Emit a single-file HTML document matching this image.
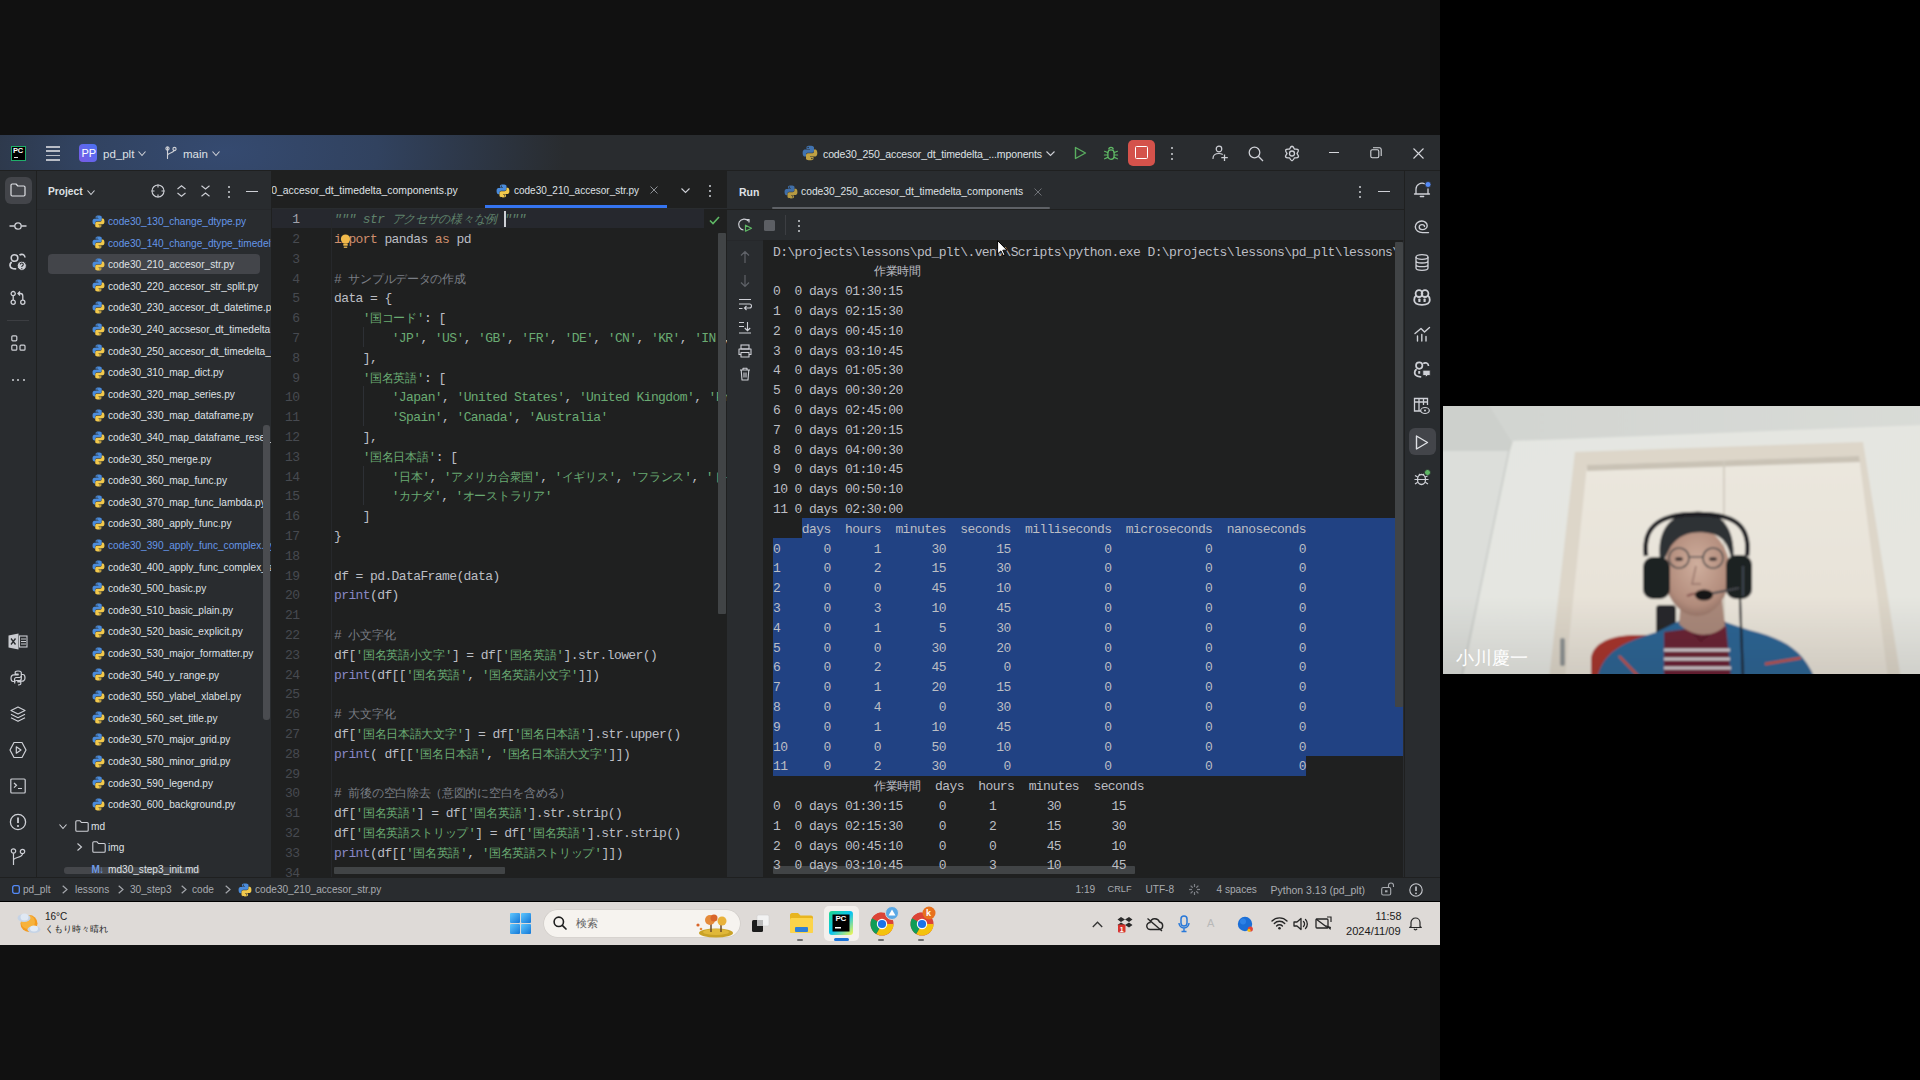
<!DOCTYPE html><html><head><meta charset="utf-8"><title>PyCharm</title><style>
*{box-sizing:border-box;margin:0;padding:0}
html,body{width:1920px;height:1080px;overflow:hidden;background:#000}
body{position:relative;font-family:"Liberation Sans",sans-serif}
.a{position:absolute}
.ui{font-family:"Liberation Sans",sans-serif;white-space:pre;position:absolute;line-height:1}
.mono{font-family:"Liberation Mono",monospace;white-space:pre;position:absolute;font-size:13px;letter-spacing:-0.6px;line-height:19.8px;height:19.8px}
.j{font-size:12px;letter-spacing:-0.3px}
svg{position:absolute;overflow:visible}
.clip{position:absolute;overflow:hidden}
</style></head><body>
<div class="a" style="left:0px;top:0px;width:1440px;height:135px;background:#111111;"></div>
<div class="a" style="left:0px;top:945px;width:1440px;height:135px;background:#111111;"></div>
<div class="a" style="left:0px;top:135px;width:1440px;height:766px;background:#292c2f;"></div>
<div class="a" style="left:0px;top:135px;width:1440px;height:36px;background:radial-gradient(ellipse 340px 160px at 225px 45%,#354a70 0%,#31425f 45%,#292c2f 100%);"></div>
<div class="a" style="left:0px;top:170px;width:1440px;height:1px;background:#1f2020;"></div>
<div class="a" style="left:11px;top:146px;width:14.5px;height:14.5px;background:#000;border:1.3px solid #1fae6a"></div>
<div class="ui" style="left:13px;top:147px;font-size:7.5px;color:#fff;font-weight:bold;letter-spacing:-0.3px">PC</div>
<div class="a" style="left:13.5px;top:156.5px;width:4.5px;height:1.2px;background:#ddd;"></div>
<div class="a" style="left:46px;top:146.2px;width:14px;height:1.8px;background:#b9bdc6;"></div>
<div class="a" style="left:46px;top:150.4px;width:14px;height:1.8px;background:#b9bdc6;"></div>
<div class="a" style="left:46px;top:154.6px;width:14px;height:1.8px;background:#b9bdc6;"></div>
<div class="a" style="left:46px;top:158.8px;width:14px;height:1.8px;background:#b9bdc6;"></div>
<div class="a" style="left:79px;top:144px;width:18px;height:18px;background:linear-gradient(45deg,#7a5ae6,#4a72f2);border-radius:4px"></div>
<div class="ui" style="left:81.5px;top:148px;font-size:11px;color:#fff;">PP</div>
<div class="ui" style="left:103px;top:148.5px;font-size:11.5px;color:#dfe1e5;">pd_plt</div>
<svg style="left:138px;top:151px" width="8" height="5" viewBox="0 0 8 5" ><path d="M0.5 0.5L4.0 4.5L7.5 0.5" fill="none" stroke="#ced0d6" stroke-width="1.1"/></svg>
<svg style="left:165px;top:146px" width="12" height="14" viewBox="0 0 12 14" ><path d="M2.5 1.5V12.5M2.5 9.5C2.5 6.5 9 7.5 9 4" fill="none" stroke="#ced0d6" stroke-width="1.1" stroke-linecap="round" stroke-linejoin="round"/></svg>
<svg style="left:165px;top:146px" width="12" height="14" viewBox="0 0 12 14" ><circle cx="2.5" cy="2.5" r="1.6" fill="none" stroke="#ced0d6" stroke-width="1.1"/><circle cx="9.5" cy="3" r="1.6" fill="none" stroke="#ced0d6" stroke-width="1.1"/></svg>
<div class="ui" style="left:183px;top:148.5px;font-size:11.5px;color:#dfe1e5;">main</div>
<svg style="left:212px;top:151px" width="8" height="5" viewBox="0 0 8 5" ><path d="M0.5 0.5L4.0 4.5L7.5 0.5" fill="none" stroke="#ced0d6" stroke-width="1.1"/></svg>
<svg style="left:802px;top:145px" width="16" height="16" viewBox="0 0 12 12" opacity="0.75"><path d="M5.9 0.5C3.2 0.5 3.4 1.7 3.4 1.7V3H6V3.4H2.3C2.3 3.4 0.5 3.2 0.5 6 0.5 8.8 2.1 8.7 2.1 8.7H3V7.4C3 7.4 2.9 5.8 4.6 5.8H7.4C7.4 5.8 9 5.8 9 4.3V1.9C9 1.9 9.2 0.5 5.9 0.5Z" fill="#4a8bdb"/><path d="M6.1 11.5C8.8 11.5 8.6 10.3 8.6 10.3V9H6V8.6H9.7C9.7 8.6 11.5 8.8 11.5 6 11.5 3.2 9.9 3.3 9.9 3.3H9V4.6C9 4.6 9.1 6.2 7.4 6.2H4.6C4.6 6.2 3 6.2 3 7.7V10.1C3 10.1 2.8 11.5 6.1 11.5Z" fill="#f2c94c"/><circle cx="4.6" cy="1.9" r="0.55" fill="#292c2f"/><circle cx="7.4" cy="10.1" r="0.55" fill="#292c2f"/></svg>
<div class="ui" style="left:823px;top:148.5px;font-size:10.5px;color:#dfe1e5;letter-spacing:-0.12px">code30_250_accesor_dt_timedelta_...mponents</div>
<svg style="left:1046px;top:151px" width="9" height="5" viewBox="0 0 9 5" ><path d="M0.5 0.5L4.5 4.5L8.5 0.5" fill="none" stroke="#ced0d6" stroke-width="1.1"/></svg>
<svg style="left:1074px;top:146px" width="13" height="14" viewBox="0 0 13 14" ><path d="M1.5 1.5L11.5 7L1.5 12.5Z" fill="none" stroke="#5aae60" stroke-width="1.4" stroke-linecap="round" stroke-linejoin="round"/></svg>
<svg style="left:1103.5px;top:146px" width="14" height="14" viewBox="0 0 14 14" ><path d="M4.8 3.6A2.2 2.2 0 0 1 9.2 3.6" fill="none" stroke="#5fb865" stroke-width="1.3"/><rect x="3.9" y="3.8" width="6.2" height="9.5" rx="3.1" fill="none" stroke="#5fb865" stroke-width="1.3"/><path d="M0.6 5.3L3.6 6.5M13.4 5.3L10.4 6.5M0.4 9H3.6M10.4 9H13.6M0.6 12.8L3.7 11.4M13.4 12.8L10.3 11.4" fill="none" stroke="#5fb865" stroke-width="1.2" stroke-linecap="round"/></svg>
<div class="a" style="left:1127.5px;top:139.5px;width:27px;height:26.5px;background:#d4524b;border-radius:5px"></div>
<div class="a" style="left:1135px;top:146px;width:12.5px;height:12.5px;background:transparent;border:1.5px solid #fff;border-radius:1.5px"></div>
<div class="a" style="left:1171px;top:147px;width:2.2px;height:2.2px;background:#ced0d6;border-radius:1px"></div>
<div class="a" style="left:1171px;top:152.5px;width:2.2px;height:2.2px;background:#ced0d6;border-radius:1px"></div>
<div class="a" style="left:1171px;top:158px;width:2.2px;height:2.2px;background:#ced0d6;border-radius:1px"></div>
<svg style="left:1212px;top:145px" width="17" height="17" viewBox="0 0 17 17" ><circle cx="7" cy="4" r="2.8" fill="none" stroke="#ced0d6" stroke-width="1.2"/><path d="M1 13.5C1 10 3.5 8.5 7 8.5C8.5 8.5 9.5 8.8 10.3 9.3" fill="none" stroke="#ced0d6" stroke-width="1.2" stroke-linecap="round"/><path d="M12.5 9.5V16M9.3 12.7H15.8" fill="none" stroke="#ced0d6" stroke-width="1.3"/></svg>
<svg style="left:1248px;top:146px" width="16" height="16" viewBox="0 0 16 16" ><circle cx="6.5" cy="6.5" r="5.3" fill="none" stroke="#ced0d6" stroke-width="1.3"/><path d="M10.3 10.3L15 15" stroke="#ced0d6" stroke-width="1.3"/></svg>
<svg style="left:1283.5px;top:144.5px" width="16" height="17" viewBox="0 0 16 17" ><path d="M5.50 4.17Q8.00 -1.70 10.50 4.17Q16.83 3.40 13.00 8.50Q16.83 13.60 10.50 12.83Q8.00 18.70 5.50 12.83Q-0.83 13.60 3.00 8.50Q-0.83 3.40 5.50 4.17Z" fill="none" stroke="#ced0d6" stroke-width="1.3" stroke-linejoin="round"/><circle cx="8" cy="8.5" r="2.5" fill="none" stroke="#ced0d6" stroke-width="1.3"/></svg>
<div class="a" style="left:1329px;top:152px;width:10px;height:1.2px;background:#d5d7dc;"></div>
<svg style="left:1370px;top:147px" width="12" height="12" viewBox="0 0 12 12" ><rect x="0.8" y="2.8" width="8" height="8" rx="1.5" fill="none" stroke="#d5d7dc" stroke-width="1.1"/><path d="M3 0.8H9.5A1.8 1.8 0 0 1 11.2 2.5V9" fill="none" stroke="#d5d7dc" stroke-width="1.1"/></svg>
<svg style="left:1413px;top:148px" width="11" height="11" viewBox="0 0 11 11" ><path d="M0.5 0.5L10.5 10.5M10.5 0.5L0.5 10.5" stroke="#d5d7dc" stroke-width="1.1"/></svg>
<div class="a" style="left:36px;top:171px;width:1px;height:706px;background:#1f2020;"></div>
<div class="a" style="left:4.5px;top:176.5px;width:27px;height:27px;background:#43454a;border-radius:6px"></div>
<svg style="left:10px;top:183px" width="16" height="14" viewBox="0 0 16 14" ><path d="M1 2.2C1 1.5 1.5 1 2.2 1H6L7.8 3H13.8C14.5 3 15 3.5 15 4.2V11.8C15 12.5 14.5 13 13.8 13H2.2C1.5 13 1 12.5 1 11.8Z" fill="none" stroke="#dfe1e5" stroke-width="1.2" stroke-linejoin="round"/></svg>
<svg style="left:9px;top:220px" width="18" height="12" viewBox="0 0 18 12" ><circle cx="9" cy="6" r="3.2" fill="none" stroke="#ced0d6" stroke-width="1.3"/><path d="M0.5 6H5.8M12.2 6H17.5" stroke="#ced0d6" stroke-width="1.3"/></svg>
<svg style="left:8px;top:253px" width="20" height="18" viewBox="0 0 20 18" ><circle cx="6.5" cy="5" r="3.3" fill="none" stroke="#ced0d6" stroke-width="1.6"/><path d="M11.5 2.2A3.3 3.3 0 0 1 17 4.5" fill="none" stroke="#ced0d6" stroke-width="1.6"/><path d="M3.2 9.5C1.5 11 1.5 14 4 15.2C5 15.7 6.5 15.8 7.5 15.8" fill="none" stroke="#ced0d6" stroke-width="1.8" stroke-linecap="round"/><circle cx="13.8" cy="12.8" r="4.6" fill="#ced0d6" stroke="#292c2f" stroke-width="1"/><path d="M12.3 11.4A1.5 1.5 0 1 1 14.2 12.9C13.8 13.1 13.8 13.5 13.8 14" fill="none" stroke="#292c2f" stroke-width="1.1"/><circle cx="13.8" cy="15.6" r="0.65" fill="#292c2f"/></svg>
<svg style="left:10px;top:289px" width="16" height="17" viewBox="0 0 16 17" ><circle cx="3.2" cy="4.6" r="2.1" fill="none" stroke="#ced0d6" stroke-width="1.3"/><circle cx="3.2" cy="13.2" r="2.1" fill="none" stroke="#ced0d6" stroke-width="1.3"/><circle cx="12.8" cy="13.2" r="2.1" fill="none" stroke="#ced0d6" stroke-width="1.3"/><path d="M3.2 6.7V11.1M12.8 11.1V7C12.8 5.5 12 4.5 10.5 4.5H8.3M10 2.5L8 4.5L10 6.5" fill="none" stroke="#ced0d6" stroke-width="1.3"/></svg>
<div class="a" style="left:7px;top:320px;width:22px;height:1px;background:#3c3e42;"></div>
<svg style="left:11px;top:335px" width="15" height="17" viewBox="0 0 15 17" ><rect x="0.8" y="0.8" width="5" height="5" rx="1" fill="none" stroke="#ced0d6" stroke-width="1.2"/><rect x="0.8" y="10.2" width="5" height="5" rx="1" fill="none" stroke="#ced0d6" stroke-width="1.2"/><rect x="9" y="10.2" width="5" height="5" rx="1" fill="none" stroke="#ced0d6" stroke-width="1.2"/></svg>
<div class="a" style="left:11.5px;top:379px;width:2.3px;height:2.3px;background:#ced0d6;border-radius:1.2px"></div>
<div class="a" style="left:17px;top:379px;width:2.3px;height:2.3px;background:#ced0d6;border-radius:1.2px"></div>
<div class="a" style="left:22.5px;top:379px;width:2.3px;height:2.3px;background:#ced0d6;border-radius:1.2px"></div>
<svg style="left:8px;top:633px" width="20" height="17" viewBox="0 0 20 17" ><path d="M0.5 2.5L10.5 0.5V16.5L0.5 14.5Z" fill="#c9cbd0"/><path d="M3 5.5L7.5 11.5M7.5 5.5L3 11.5" stroke="#292c2f" stroke-width="1.3"/><rect x="11.5" y="3" width="7.5" height="11" fill="none" stroke="#c9cbd0" stroke-width="1.1"/><path d="M13 6H18M13 8.5H18M13 11H18" stroke="#c9cbd0" stroke-width="1"/></svg>
<svg style="left:10px;top:670px" width="16" height="16" viewBox="0 0 16 16" ><path d="M8 1C5 1 5.2 2.3 5.2 2.3V4H8.2V4.8H4C4 4.8 1 4.5 1 8S3 11.5 3 11.5H4.5V9.5C4.5 9.5 4.5 7.5 6.5 7.5H9.5C9.5 7.5 11.3 7.5 11.3 5.8V2.6C11.3 2.6 11.5 1 8 1ZM8 15C11 15 10.8 13.7 10.8 13.7V12H7.8V11.2H12C12 11.2 15 11.5 15 8S13 4.5 13 4.5H11.5" fill="none" stroke="#ced0d6" stroke-width="1.2" stroke-linejoin="round"/><path d="M11.3 6V8.5C11.3 8.5 11.3 10.5 9.5 10.5H6.5C6.5 10.5 4.7 10.5 4.7 12.2V13.5" fill="none" stroke="#ced0d6" stroke-width="1.2"/></svg>
<svg style="left:10px;top:706px" width="16" height="17" viewBox="0 0 16 17" ><path d="M8 1L15 4.5L8 8L1 4.5Z" fill="none" stroke="#ced0d6" stroke-width="1.2" stroke-linejoin="round"/><path d="M1 8.2L8 11.7L15 8.2M1 11.8L8 15.3L15 11.8" fill="none" stroke="#ced0d6" stroke-width="1.2" stroke-linejoin="round"/></svg>
<svg style="left:9px;top:741px" width="18" height="18" viewBox="0 0 18 18" ><path d="M5 1.5H13L17 9L13 16.5H5L1 9Z" fill="none" stroke="#ced0d6" stroke-width="1.2" stroke-linejoin="round"/><path d="M7.3 5.8L12 9L7.3 12.2Z" fill="none" stroke="#ced0d6" stroke-width="1.2" stroke-linejoin="round"/></svg>
<svg style="left:10px;top:778px" width="16" height="16" viewBox="0 0 16 16" ><rect x="0.8" y="1" width="14.4" height="14" rx="1" fill="none" stroke="#ced0d6" stroke-width="1.2"/><path d="M4 5L6.5 7.3L4 9.6M8 10.5H12" fill="none" stroke="#ced0d6" stroke-width="1.2"/></svg>
<svg style="left:9px;top:813px" width="18" height="18" viewBox="0 0 18 18" ><circle cx="9" cy="9" r="7.6" fill="none" stroke="#ced0d6" stroke-width="1.3"/><path d="M9 4.5V10" stroke="#ced0d6" stroke-width="1.8"/><circle cx="9" cy="13" r="1.1" fill="#ced0d6"/></svg>
<svg style="left:10px;top:848px" width="16" height="18" viewBox="0 0 16 18" ><circle cx="3.5" cy="3" r="2.2" fill="none" stroke="#ced0d6" stroke-width="1.2"/><circle cx="12.5" cy="3.5" r="2.2" fill="none" stroke="#ced0d6" stroke-width="1.2"/><path d="M3.5 5.2V17M3.5 12C3.5 9 12.5 10 12.5 5.7" fill="none" stroke="#ced0d6" stroke-width="1.2"/></svg>
<div class="a" style="left:271px;top:171px;width:1px;height:706px;background:#1f2020;"></div>
<div class="ui" style="left:48px;top:186.5px;font-size:10.2px;color:#dfe1e5;font-weight:bold">Project</div>
<svg style="left:87px;top:189.5px" width="8" height="5" viewBox="0 0 8 5" ><path d="M0.5 0.5L4.0 4.5L7.5 0.5" fill="none" stroke="#ced0d6" stroke-width="1.1"/></svg>
<svg style="left:151px;top:184px" width="14" height="14" viewBox="0 0 14 14" ><circle cx="7" cy="7" r="6" fill="none" stroke="#ced0d6" stroke-width="1.1"/><path d="M7 0.5V3.5M7 10.5V13.5M0.5 7H3.5M10.5 7H13.5" stroke="#ced0d6" stroke-width="1.1"/></svg>
<svg style="left:177px;top:185px" width="9" height="12" viewBox="0 0 9 12" ><path d="M0.5 4L4.5 0.8L8.5 4M0.5 8L4.5 11.2L8.5 8" fill="none" stroke="#ced0d6" stroke-width="1.1"/></svg>
<svg style="left:201px;top:185px" width="9" height="12" viewBox="0 0 9 12" ><path d="M0.5 0.8L4.5 4L8.5 0.8M0.5 11.2L4.5 8L8.5 11.2" fill="none" stroke="#ced0d6" stroke-width="1.1"/></svg>
<div class="a" style="left:227.5px;top:185.5px;width:2px;height:2px;background:#ced0d6;border-radius:1px"></div>
<div class="a" style="left:227.5px;top:190.5px;width:2px;height:2px;background:#ced0d6;border-radius:1px"></div>
<div class="a" style="left:227.5px;top:195.5px;width:2px;height:2px;background:#ced0d6;border-radius:1px"></div>
<div class="a" style="left:246px;top:191px;width:12px;height:1.3px;background:#ced0d6;"></div>
<div class="a" style="left:37px;top:209px;width:234px;height:1px;background:#26282b;"></div>
<div class="clip" style="left:37px;top:210px;width:234px;height:667px;">
<div class="a" style="left:27px;top:656.5px;width:136px;height:7px;background:#45474b;border-radius:3px"></div>
<div class="a" style="left:11px;top:43.5px;width:212px;height:20.5px;background:#43454a;border-radius:4px"></div>
<svg style="left:54.5px;top:4.5px" width="13" height="13" viewBox="0 0 12 12" ><path d="M5.9 0.5C3.2 0.5 3.4 1.7 3.4 1.7V3H6V3.4H2.3C2.3 3.4 0.5 3.2 0.5 6 0.5 8.8 2.1 8.7 2.1 8.7H3V7.4C3 7.4 2.9 5.8 4.6 5.8H7.4C7.4 5.8 9 5.8 9 4.3V1.9C9 1.9 9.2 0.5 5.9 0.5Z" fill="#4a8bdb"/><path d="M6.1 11.5C8.8 11.5 8.6 10.3 8.6 10.3V9H6V8.6H9.7C9.7 8.6 11.5 8.8 11.5 6 11.5 3.2 9.9 3.3 9.9 3.3H9V4.6C9 4.6 9.1 6.2 7.4 6.2H4.6C4.6 6.2 3 6.2 3 7.7V10.1C3 10.1 2.8 11.5 6.1 11.5Z" fill="#f2c94c"/><circle cx="4.6" cy="1.9" r="0.55" fill="#292c2f"/><circle cx="7.4" cy="10.1" r="0.55" fill="#292c2f"/></svg>
<div class="ui" style="left:71px;top:6.9px;font-size:10.1px;color:#6596e8;">code30_130_change_dtype.py</div>
<svg style="left:54.5px;top:26.1px" width="13" height="13" viewBox="0 0 12 12" ><path d="M5.9 0.5C3.2 0.5 3.4 1.7 3.4 1.7V3H6V3.4H2.3C2.3 3.4 0.5 3.2 0.5 6 0.5 8.8 2.1 8.7 2.1 8.7H3V7.4C3 7.4 2.9 5.8 4.6 5.8H7.4C7.4 5.8 9 5.8 9 4.3V1.9C9 1.9 9.2 0.5 5.9 0.5Z" fill="#4a8bdb"/><path d="M6.1 11.5C8.8 11.5 8.6 10.3 8.6 10.3V9H6V8.6H9.7C9.7 8.6 11.5 8.8 11.5 6 11.5 3.2 9.9 3.3 9.9 3.3H9V4.6C9 4.6 9.1 6.2 7.4 6.2H4.6C4.6 6.2 3 6.2 3 7.7V10.1C3 10.1 2.8 11.5 6.1 11.5Z" fill="#f2c94c"/><circle cx="4.6" cy="1.9" r="0.55" fill="#292c2f"/><circle cx="7.4" cy="10.1" r="0.55" fill="#292c2f"/></svg>
<div class="ui" style="left:71px;top:28.5px;font-size:10.1px;color:#6596e8;">code30_140_change_dtype_timedelta.py</div>
<svg style="left:54.5px;top:47.7px" width="13" height="13" viewBox="0 0 12 12" ><path d="M5.9 0.5C3.2 0.5 3.4 1.7 3.4 1.7V3H6V3.4H2.3C2.3 3.4 0.5 3.2 0.5 6 0.5 8.8 2.1 8.7 2.1 8.7H3V7.4C3 7.4 2.9 5.8 4.6 5.8H7.4C7.4 5.8 9 5.8 9 4.3V1.9C9 1.9 9.2 0.5 5.9 0.5Z" fill="#4a8bdb"/><path d="M6.1 11.5C8.8 11.5 8.6 10.3 8.6 10.3V9H6V8.6H9.7C9.7 8.6 11.5 8.8 11.5 6 11.5 3.2 9.9 3.3 9.9 3.3H9V4.6C9 4.6 9.1 6.2 7.4 6.2H4.6C4.6 6.2 3 6.2 3 7.7V10.1C3 10.1 2.8 11.5 6.1 11.5Z" fill="#f2c94c"/><circle cx="4.6" cy="1.9" r="0.55" fill="#292c2f"/><circle cx="7.4" cy="10.1" r="0.55" fill="#292c2f"/></svg>
<div class="ui" style="left:71px;top:50.1px;font-size:10.1px;color:#dfe1e5;">code30_210_accesor_str.py</div>
<svg style="left:54.5px;top:69.3px" width="13" height="13" viewBox="0 0 12 12" ><path d="M5.9 0.5C3.2 0.5 3.4 1.7 3.4 1.7V3H6V3.4H2.3C2.3 3.4 0.5 3.2 0.5 6 0.5 8.8 2.1 8.7 2.1 8.7H3V7.4C3 7.4 2.9 5.8 4.6 5.8H7.4C7.4 5.8 9 5.8 9 4.3V1.9C9 1.9 9.2 0.5 5.9 0.5Z" fill="#4a8bdb"/><path d="M6.1 11.5C8.8 11.5 8.6 10.3 8.6 10.3V9H6V8.6H9.7C9.7 8.6 11.5 8.8 11.5 6 11.5 3.2 9.9 3.3 9.9 3.3H9V4.6C9 4.6 9.1 6.2 7.4 6.2H4.6C4.6 6.2 3 6.2 3 7.7V10.1C3 10.1 2.8 11.5 6.1 11.5Z" fill="#f2c94c"/><circle cx="4.6" cy="1.9" r="0.55" fill="#292c2f"/><circle cx="7.4" cy="10.1" r="0.55" fill="#292c2f"/></svg>
<div class="ui" style="left:71px;top:71.7px;font-size:10.1px;color:#dfe1e5;">code30_220_accesor_str_split.py</div>
<svg style="left:54.5px;top:90.9px" width="13" height="13" viewBox="0 0 12 12" ><path d="M5.9 0.5C3.2 0.5 3.4 1.7 3.4 1.7V3H6V3.4H2.3C2.3 3.4 0.5 3.2 0.5 6 0.5 8.8 2.1 8.7 2.1 8.7H3V7.4C3 7.4 2.9 5.8 4.6 5.8H7.4C7.4 5.8 9 5.8 9 4.3V1.9C9 1.9 9.2 0.5 5.9 0.5Z" fill="#4a8bdb"/><path d="M6.1 11.5C8.8 11.5 8.6 10.3 8.6 10.3V9H6V8.6H9.7C9.7 8.6 11.5 8.8 11.5 6 11.5 3.2 9.9 3.3 9.9 3.3H9V4.6C9 4.6 9.1 6.2 7.4 6.2H4.6C4.6 6.2 3 6.2 3 7.7V10.1C3 10.1 2.8 11.5 6.1 11.5Z" fill="#f2c94c"/><circle cx="4.6" cy="1.9" r="0.55" fill="#292c2f"/><circle cx="7.4" cy="10.1" r="0.55" fill="#292c2f"/></svg>
<div class="ui" style="left:71px;top:93.3px;font-size:10.1px;color:#dfe1e5;">code30_230_accesor_dt_datetime.py</div>
<svg style="left:54.5px;top:112.5px" width="13" height="13" viewBox="0 0 12 12" ><path d="M5.9 0.5C3.2 0.5 3.4 1.7 3.4 1.7V3H6V3.4H2.3C2.3 3.4 0.5 3.2 0.5 6 0.5 8.8 2.1 8.7 2.1 8.7H3V7.4C3 7.4 2.9 5.8 4.6 5.8H7.4C7.4 5.8 9 5.8 9 4.3V1.9C9 1.9 9.2 0.5 5.9 0.5Z" fill="#4a8bdb"/><path d="M6.1 11.5C8.8 11.5 8.6 10.3 8.6 10.3V9H6V8.6H9.7C9.7 8.6 11.5 8.8 11.5 6 11.5 3.2 9.9 3.3 9.9 3.3H9V4.6C9 4.6 9.1 6.2 7.4 6.2H4.6C4.6 6.2 3 6.2 3 7.7V10.1C3 10.1 2.8 11.5 6.1 11.5Z" fill="#f2c94c"/><circle cx="4.6" cy="1.9" r="0.55" fill="#292c2f"/><circle cx="7.4" cy="10.1" r="0.55" fill="#292c2f"/></svg>
<div class="ui" style="left:71px;top:114.9px;font-size:10.1px;color:#dfe1e5;">code30_240_accsesor_dt_timedelta.py</div>
<svg style="left:54.5px;top:134.1px" width="13" height="13" viewBox="0 0 12 12" ><path d="M5.9 0.5C3.2 0.5 3.4 1.7 3.4 1.7V3H6V3.4H2.3C2.3 3.4 0.5 3.2 0.5 6 0.5 8.8 2.1 8.7 2.1 8.7H3V7.4C3 7.4 2.9 5.8 4.6 5.8H7.4C7.4 5.8 9 5.8 9 4.3V1.9C9 1.9 9.2 0.5 5.9 0.5Z" fill="#4a8bdb"/><path d="M6.1 11.5C8.8 11.5 8.6 10.3 8.6 10.3V9H6V8.6H9.7C9.7 8.6 11.5 8.8 11.5 6 11.5 3.2 9.9 3.3 9.9 3.3H9V4.6C9 4.6 9.1 6.2 7.4 6.2H4.6C4.6 6.2 3 6.2 3 7.7V10.1C3 10.1 2.8 11.5 6.1 11.5Z" fill="#f2c94c"/><circle cx="4.6" cy="1.9" r="0.55" fill="#292c2f"/><circle cx="7.4" cy="10.1" r="0.55" fill="#292c2f"/></svg>
<div class="ui" style="left:71px;top:136.5px;font-size:10.1px;color:#dfe1e5;">code30_250_accesor_dt_timedelta_components.py</div>
<svg style="left:54.5px;top:155.7px" width="13" height="13" viewBox="0 0 12 12" ><path d="M5.9 0.5C3.2 0.5 3.4 1.7 3.4 1.7V3H6V3.4H2.3C2.3 3.4 0.5 3.2 0.5 6 0.5 8.8 2.1 8.7 2.1 8.7H3V7.4C3 7.4 2.9 5.8 4.6 5.8H7.4C7.4 5.8 9 5.8 9 4.3V1.9C9 1.9 9.2 0.5 5.9 0.5Z" fill="#4a8bdb"/><path d="M6.1 11.5C8.8 11.5 8.6 10.3 8.6 10.3V9H6V8.6H9.7C9.7 8.6 11.5 8.8 11.5 6 11.5 3.2 9.9 3.3 9.9 3.3H9V4.6C9 4.6 9.1 6.2 7.4 6.2H4.6C4.6 6.2 3 6.2 3 7.7V10.1C3 10.1 2.8 11.5 6.1 11.5Z" fill="#f2c94c"/><circle cx="4.6" cy="1.9" r="0.55" fill="#292c2f"/><circle cx="7.4" cy="10.1" r="0.55" fill="#292c2f"/></svg>
<div class="ui" style="left:71px;top:158.1px;font-size:10.1px;color:#dfe1e5;">code30_310_map_dict.py</div>
<svg style="left:54.5px;top:177.3px" width="13" height="13" viewBox="0 0 12 12" ><path d="M5.9 0.5C3.2 0.5 3.4 1.7 3.4 1.7V3H6V3.4H2.3C2.3 3.4 0.5 3.2 0.5 6 0.5 8.8 2.1 8.7 2.1 8.7H3V7.4C3 7.4 2.9 5.8 4.6 5.8H7.4C7.4 5.8 9 5.8 9 4.3V1.9C9 1.9 9.2 0.5 5.9 0.5Z" fill="#4a8bdb"/><path d="M6.1 11.5C8.8 11.5 8.6 10.3 8.6 10.3V9H6V8.6H9.7C9.7 8.6 11.5 8.8 11.5 6 11.5 3.2 9.9 3.3 9.9 3.3H9V4.6C9 4.6 9.1 6.2 7.4 6.2H4.6C4.6 6.2 3 6.2 3 7.7V10.1C3 10.1 2.8 11.5 6.1 11.5Z" fill="#f2c94c"/><circle cx="4.6" cy="1.9" r="0.55" fill="#292c2f"/><circle cx="7.4" cy="10.1" r="0.55" fill="#292c2f"/></svg>
<div class="ui" style="left:71px;top:179.7px;font-size:10.1px;color:#dfe1e5;">code30_320_map_series.py</div>
<svg style="left:54.5px;top:198.9px" width="13" height="13" viewBox="0 0 12 12" ><path d="M5.9 0.5C3.2 0.5 3.4 1.7 3.4 1.7V3H6V3.4H2.3C2.3 3.4 0.5 3.2 0.5 6 0.5 8.8 2.1 8.7 2.1 8.7H3V7.4C3 7.4 2.9 5.8 4.6 5.8H7.4C7.4 5.8 9 5.8 9 4.3V1.9C9 1.9 9.2 0.5 5.9 0.5Z" fill="#4a8bdb"/><path d="M6.1 11.5C8.8 11.5 8.6 10.3 8.6 10.3V9H6V8.6H9.7C9.7 8.6 11.5 8.8 11.5 6 11.5 3.2 9.9 3.3 9.9 3.3H9V4.6C9 4.6 9.1 6.2 7.4 6.2H4.6C4.6 6.2 3 6.2 3 7.7V10.1C3 10.1 2.8 11.5 6.1 11.5Z" fill="#f2c94c"/><circle cx="4.6" cy="1.9" r="0.55" fill="#292c2f"/><circle cx="7.4" cy="10.1" r="0.55" fill="#292c2f"/></svg>
<div class="ui" style="left:71px;top:201.3px;font-size:10.1px;color:#dfe1e5;">code30_330_map_dataframe.py</div>
<svg style="left:54.5px;top:220.5px" width="13" height="13" viewBox="0 0 12 12" ><path d="M5.9 0.5C3.2 0.5 3.4 1.7 3.4 1.7V3H6V3.4H2.3C2.3 3.4 0.5 3.2 0.5 6 0.5 8.8 2.1 8.7 2.1 8.7H3V7.4C3 7.4 2.9 5.8 4.6 5.8H7.4C7.4 5.8 9 5.8 9 4.3V1.9C9 1.9 9.2 0.5 5.9 0.5Z" fill="#4a8bdb"/><path d="M6.1 11.5C8.8 11.5 8.6 10.3 8.6 10.3V9H6V8.6H9.7C9.7 8.6 11.5 8.8 11.5 6 11.5 3.2 9.9 3.3 9.9 3.3H9V4.6C9 4.6 9.1 6.2 7.4 6.2H4.6C4.6 6.2 3 6.2 3 7.7V10.1C3 10.1 2.8 11.5 6.1 11.5Z" fill="#f2c94c"/><circle cx="4.6" cy="1.9" r="0.55" fill="#292c2f"/><circle cx="7.4" cy="10.1" r="0.55" fill="#292c2f"/></svg>
<div class="ui" style="left:71px;top:222.9px;font-size:10.1px;color:#dfe1e5;">code30_340_map_dataframe_reset_index.py</div>
<svg style="left:54.5px;top:242.1px" width="13" height="13" viewBox="0 0 12 12" ><path d="M5.9 0.5C3.2 0.5 3.4 1.7 3.4 1.7V3H6V3.4H2.3C2.3 3.4 0.5 3.2 0.5 6 0.5 8.8 2.1 8.7 2.1 8.7H3V7.4C3 7.4 2.9 5.8 4.6 5.8H7.4C7.4 5.8 9 5.8 9 4.3V1.9C9 1.9 9.2 0.5 5.9 0.5Z" fill="#4a8bdb"/><path d="M6.1 11.5C8.8 11.5 8.6 10.3 8.6 10.3V9H6V8.6H9.7C9.7 8.6 11.5 8.8 11.5 6 11.5 3.2 9.9 3.3 9.9 3.3H9V4.6C9 4.6 9.1 6.2 7.4 6.2H4.6C4.6 6.2 3 6.2 3 7.7V10.1C3 10.1 2.8 11.5 6.1 11.5Z" fill="#f2c94c"/><circle cx="4.6" cy="1.9" r="0.55" fill="#292c2f"/><circle cx="7.4" cy="10.1" r="0.55" fill="#292c2f"/></svg>
<div class="ui" style="left:71px;top:244.5px;font-size:10.1px;color:#dfe1e5;">code30_350_merge.py</div>
<svg style="left:54.5px;top:263.7px" width="13" height="13" viewBox="0 0 12 12" ><path d="M5.9 0.5C3.2 0.5 3.4 1.7 3.4 1.7V3H6V3.4H2.3C2.3 3.4 0.5 3.2 0.5 6 0.5 8.8 2.1 8.7 2.1 8.7H3V7.4C3 7.4 2.9 5.8 4.6 5.8H7.4C7.4 5.8 9 5.8 9 4.3V1.9C9 1.9 9.2 0.5 5.9 0.5Z" fill="#4a8bdb"/><path d="M6.1 11.5C8.8 11.5 8.6 10.3 8.6 10.3V9H6V8.6H9.7C9.7 8.6 11.5 8.8 11.5 6 11.5 3.2 9.9 3.3 9.9 3.3H9V4.6C9 4.6 9.1 6.2 7.4 6.2H4.6C4.6 6.2 3 6.2 3 7.7V10.1C3 10.1 2.8 11.5 6.1 11.5Z" fill="#f2c94c"/><circle cx="4.6" cy="1.9" r="0.55" fill="#292c2f"/><circle cx="7.4" cy="10.1" r="0.55" fill="#292c2f"/></svg>
<div class="ui" style="left:71px;top:266.1px;font-size:10.1px;color:#dfe1e5;">code30_360_map_func.py</div>
<svg style="left:54.5px;top:285.3px" width="13" height="13" viewBox="0 0 12 12" ><path d="M5.9 0.5C3.2 0.5 3.4 1.7 3.4 1.7V3H6V3.4H2.3C2.3 3.4 0.5 3.2 0.5 6 0.5 8.8 2.1 8.7 2.1 8.7H3V7.4C3 7.4 2.9 5.8 4.6 5.8H7.4C7.4 5.8 9 5.8 9 4.3V1.9C9 1.9 9.2 0.5 5.9 0.5Z" fill="#4a8bdb"/><path d="M6.1 11.5C8.8 11.5 8.6 10.3 8.6 10.3V9H6V8.6H9.7C9.7 8.6 11.5 8.8 11.5 6 11.5 3.2 9.9 3.3 9.9 3.3H9V4.6C9 4.6 9.1 6.2 7.4 6.2H4.6C4.6 6.2 3 6.2 3 7.7V10.1C3 10.1 2.8 11.5 6.1 11.5Z" fill="#f2c94c"/><circle cx="4.6" cy="1.9" r="0.55" fill="#292c2f"/><circle cx="7.4" cy="10.1" r="0.55" fill="#292c2f"/></svg>
<div class="ui" style="left:71px;top:287.7px;font-size:10.1px;color:#dfe1e5;">code30_370_map_func_lambda.py</div>
<svg style="left:54.5px;top:306.9px" width="13" height="13" viewBox="0 0 12 12" ><path d="M5.9 0.5C3.2 0.5 3.4 1.7 3.4 1.7V3H6V3.4H2.3C2.3 3.4 0.5 3.2 0.5 6 0.5 8.8 2.1 8.7 2.1 8.7H3V7.4C3 7.4 2.9 5.8 4.6 5.8H7.4C7.4 5.8 9 5.8 9 4.3V1.9C9 1.9 9.2 0.5 5.9 0.5Z" fill="#4a8bdb"/><path d="M6.1 11.5C8.8 11.5 8.6 10.3 8.6 10.3V9H6V8.6H9.7C9.7 8.6 11.5 8.8 11.5 6 11.5 3.2 9.9 3.3 9.9 3.3H9V4.6C9 4.6 9.1 6.2 7.4 6.2H4.6C4.6 6.2 3 6.2 3 7.7V10.1C3 10.1 2.8 11.5 6.1 11.5Z" fill="#f2c94c"/><circle cx="4.6" cy="1.9" r="0.55" fill="#292c2f"/><circle cx="7.4" cy="10.1" r="0.55" fill="#292c2f"/></svg>
<div class="ui" style="left:71px;top:309.3px;font-size:10.1px;color:#dfe1e5;">code30_380_apply_func.py</div>
<svg style="left:54.5px;top:328.5px" width="13" height="13" viewBox="0 0 12 12" ><path d="M5.9 0.5C3.2 0.5 3.4 1.7 3.4 1.7V3H6V3.4H2.3C2.3 3.4 0.5 3.2 0.5 6 0.5 8.8 2.1 8.7 2.1 8.7H3V7.4C3 7.4 2.9 5.8 4.6 5.8H7.4C7.4 5.8 9 5.8 9 4.3V1.9C9 1.9 9.2 0.5 5.9 0.5Z" fill="#4a8bdb"/><path d="M6.1 11.5C8.8 11.5 8.6 10.3 8.6 10.3V9H6V8.6H9.7C9.7 8.6 11.5 8.8 11.5 6 11.5 3.2 9.9 3.3 9.9 3.3H9V4.6C9 4.6 9.1 6.2 7.4 6.2H4.6C4.6 6.2 3 6.2 3 7.7V10.1C3 10.1 2.8 11.5 6.1 11.5Z" fill="#f2c94c"/><circle cx="4.6" cy="1.9" r="0.55" fill="#292c2f"/><circle cx="7.4" cy="10.1" r="0.55" fill="#292c2f"/></svg>
<div class="ui" style="left:71px;top:330.9px;font-size:10.1px;color:#6596e8;">code30_390_apply_func_complex.py</div>
<svg style="left:54.5px;top:350.1px" width="13" height="13" viewBox="0 0 12 12" ><path d="M5.9 0.5C3.2 0.5 3.4 1.7 3.4 1.7V3H6V3.4H2.3C2.3 3.4 0.5 3.2 0.5 6 0.5 8.8 2.1 8.7 2.1 8.7H3V7.4C3 7.4 2.9 5.8 4.6 5.8H7.4C7.4 5.8 9 5.8 9 4.3V1.9C9 1.9 9.2 0.5 5.9 0.5Z" fill="#4a8bdb"/><path d="M6.1 11.5C8.8 11.5 8.6 10.3 8.6 10.3V9H6V8.6H9.7C9.7 8.6 11.5 8.8 11.5 6 11.5 3.2 9.9 3.3 9.9 3.3H9V4.6C9 4.6 9.1 6.2 7.4 6.2H4.6C4.6 6.2 3 6.2 3 7.7V10.1C3 10.1 2.8 11.5 6.1 11.5Z" fill="#f2c94c"/><circle cx="4.6" cy="1.9" r="0.55" fill="#292c2f"/><circle cx="7.4" cy="10.1" r="0.55" fill="#292c2f"/></svg>
<div class="ui" style="left:71px;top:352.5px;font-size:10.1px;color:#dfe1e5;">code30_400_apply_func_complex_lambda.py</div>
<svg style="left:54.5px;top:371.7px" width="13" height="13" viewBox="0 0 12 12" ><path d="M5.9 0.5C3.2 0.5 3.4 1.7 3.4 1.7V3H6V3.4H2.3C2.3 3.4 0.5 3.2 0.5 6 0.5 8.8 2.1 8.7 2.1 8.7H3V7.4C3 7.4 2.9 5.8 4.6 5.8H7.4C7.4 5.8 9 5.8 9 4.3V1.9C9 1.9 9.2 0.5 5.9 0.5Z" fill="#4a8bdb"/><path d="M6.1 11.5C8.8 11.5 8.6 10.3 8.6 10.3V9H6V8.6H9.7C9.7 8.6 11.5 8.8 11.5 6 11.5 3.2 9.9 3.3 9.9 3.3H9V4.6C9 4.6 9.1 6.2 7.4 6.2H4.6C4.6 6.2 3 6.2 3 7.7V10.1C3 10.1 2.8 11.5 6.1 11.5Z" fill="#f2c94c"/><circle cx="4.6" cy="1.9" r="0.55" fill="#292c2f"/><circle cx="7.4" cy="10.1" r="0.55" fill="#292c2f"/></svg>
<div class="ui" style="left:71px;top:374.1px;font-size:10.1px;color:#dfe1e5;">code30_500_basic.py</div>
<svg style="left:54.5px;top:393.3px" width="13" height="13" viewBox="0 0 12 12" ><path d="M5.9 0.5C3.2 0.5 3.4 1.7 3.4 1.7V3H6V3.4H2.3C2.3 3.4 0.5 3.2 0.5 6 0.5 8.8 2.1 8.7 2.1 8.7H3V7.4C3 7.4 2.9 5.8 4.6 5.8H7.4C7.4 5.8 9 5.8 9 4.3V1.9C9 1.9 9.2 0.5 5.9 0.5Z" fill="#4a8bdb"/><path d="M6.1 11.5C8.8 11.5 8.6 10.3 8.6 10.3V9H6V8.6H9.7C9.7 8.6 11.5 8.8 11.5 6 11.5 3.2 9.9 3.3 9.9 3.3H9V4.6C9 4.6 9.1 6.2 7.4 6.2H4.6C4.6 6.2 3 6.2 3 7.7V10.1C3 10.1 2.8 11.5 6.1 11.5Z" fill="#f2c94c"/><circle cx="4.6" cy="1.9" r="0.55" fill="#292c2f"/><circle cx="7.4" cy="10.1" r="0.55" fill="#292c2f"/></svg>
<div class="ui" style="left:71px;top:395.7px;font-size:10.1px;color:#dfe1e5;">code30_510_basic_plain.py</div>
<svg style="left:54.5px;top:414.9px" width="13" height="13" viewBox="0 0 12 12" ><path d="M5.9 0.5C3.2 0.5 3.4 1.7 3.4 1.7V3H6V3.4H2.3C2.3 3.4 0.5 3.2 0.5 6 0.5 8.8 2.1 8.7 2.1 8.7H3V7.4C3 7.4 2.9 5.8 4.6 5.8H7.4C7.4 5.8 9 5.8 9 4.3V1.9C9 1.9 9.2 0.5 5.9 0.5Z" fill="#4a8bdb"/><path d="M6.1 11.5C8.8 11.5 8.6 10.3 8.6 10.3V9H6V8.6H9.7C9.7 8.6 11.5 8.8 11.5 6 11.5 3.2 9.9 3.3 9.9 3.3H9V4.6C9 4.6 9.1 6.2 7.4 6.2H4.6C4.6 6.2 3 6.2 3 7.7V10.1C3 10.1 2.8 11.5 6.1 11.5Z" fill="#f2c94c"/><circle cx="4.6" cy="1.9" r="0.55" fill="#292c2f"/><circle cx="7.4" cy="10.1" r="0.55" fill="#292c2f"/></svg>
<div class="ui" style="left:71px;top:417.3px;font-size:10.1px;color:#dfe1e5;">code30_520_basic_explicit.py</div>
<svg style="left:54.5px;top:436.5px" width="13" height="13" viewBox="0 0 12 12" ><path d="M5.9 0.5C3.2 0.5 3.4 1.7 3.4 1.7V3H6V3.4H2.3C2.3 3.4 0.5 3.2 0.5 6 0.5 8.8 2.1 8.7 2.1 8.7H3V7.4C3 7.4 2.9 5.8 4.6 5.8H7.4C7.4 5.8 9 5.8 9 4.3V1.9C9 1.9 9.2 0.5 5.9 0.5Z" fill="#4a8bdb"/><path d="M6.1 11.5C8.8 11.5 8.6 10.3 8.6 10.3V9H6V8.6H9.7C9.7 8.6 11.5 8.8 11.5 6 11.5 3.2 9.9 3.3 9.9 3.3H9V4.6C9 4.6 9.1 6.2 7.4 6.2H4.6C4.6 6.2 3 6.2 3 7.7V10.1C3 10.1 2.8 11.5 6.1 11.5Z" fill="#f2c94c"/><circle cx="4.6" cy="1.9" r="0.55" fill="#292c2f"/><circle cx="7.4" cy="10.1" r="0.55" fill="#292c2f"/></svg>
<div class="ui" style="left:71px;top:438.9px;font-size:10.1px;color:#dfe1e5;">code30_530_major_formatter.py</div>
<svg style="left:54.5px;top:458.1px" width="13" height="13" viewBox="0 0 12 12" ><path d="M5.9 0.5C3.2 0.5 3.4 1.7 3.4 1.7V3H6V3.4H2.3C2.3 3.4 0.5 3.2 0.5 6 0.5 8.8 2.1 8.7 2.1 8.7H3V7.4C3 7.4 2.9 5.8 4.6 5.8H7.4C7.4 5.8 9 5.8 9 4.3V1.9C9 1.9 9.2 0.5 5.9 0.5Z" fill="#4a8bdb"/><path d="M6.1 11.5C8.8 11.5 8.6 10.3 8.6 10.3V9H6V8.6H9.7C9.7 8.6 11.5 8.8 11.5 6 11.5 3.2 9.9 3.3 9.9 3.3H9V4.6C9 4.6 9.1 6.2 7.4 6.2H4.6C4.6 6.2 3 6.2 3 7.7V10.1C3 10.1 2.8 11.5 6.1 11.5Z" fill="#f2c94c"/><circle cx="4.6" cy="1.9" r="0.55" fill="#292c2f"/><circle cx="7.4" cy="10.1" r="0.55" fill="#292c2f"/></svg>
<div class="ui" style="left:71px;top:460.5px;font-size:10.1px;color:#dfe1e5;">code30_540_y_range.py</div>
<svg style="left:54.5px;top:479.7px" width="13" height="13" viewBox="0 0 12 12" ><path d="M5.9 0.5C3.2 0.5 3.4 1.7 3.4 1.7V3H6V3.4H2.3C2.3 3.4 0.5 3.2 0.5 6 0.5 8.8 2.1 8.7 2.1 8.7H3V7.4C3 7.4 2.9 5.8 4.6 5.8H7.4C7.4 5.8 9 5.8 9 4.3V1.9C9 1.9 9.2 0.5 5.9 0.5Z" fill="#4a8bdb"/><path d="M6.1 11.5C8.8 11.5 8.6 10.3 8.6 10.3V9H6V8.6H9.7C9.7 8.6 11.5 8.8 11.5 6 11.5 3.2 9.9 3.3 9.9 3.3H9V4.6C9 4.6 9.1 6.2 7.4 6.2H4.6C4.6 6.2 3 6.2 3 7.7V10.1C3 10.1 2.8 11.5 6.1 11.5Z" fill="#f2c94c"/><circle cx="4.6" cy="1.9" r="0.55" fill="#292c2f"/><circle cx="7.4" cy="10.1" r="0.55" fill="#292c2f"/></svg>
<div class="ui" style="left:71px;top:482.1px;font-size:10.1px;color:#dfe1e5;">code30_550_ylabel_xlabel.py</div>
<svg style="left:54.5px;top:501.3px" width="13" height="13" viewBox="0 0 12 12" ><path d="M5.9 0.5C3.2 0.5 3.4 1.7 3.4 1.7V3H6V3.4H2.3C2.3 3.4 0.5 3.2 0.5 6 0.5 8.8 2.1 8.7 2.1 8.7H3V7.4C3 7.4 2.9 5.8 4.6 5.8H7.4C7.4 5.8 9 5.8 9 4.3V1.9C9 1.9 9.2 0.5 5.9 0.5Z" fill="#4a8bdb"/><path d="M6.1 11.5C8.8 11.5 8.6 10.3 8.6 10.3V9H6V8.6H9.7C9.7 8.6 11.5 8.8 11.5 6 11.5 3.2 9.9 3.3 9.9 3.3H9V4.6C9 4.6 9.1 6.2 7.4 6.2H4.6C4.6 6.2 3 6.2 3 7.7V10.1C3 10.1 2.8 11.5 6.1 11.5Z" fill="#f2c94c"/><circle cx="4.6" cy="1.9" r="0.55" fill="#292c2f"/><circle cx="7.4" cy="10.1" r="0.55" fill="#292c2f"/></svg>
<div class="ui" style="left:71px;top:503.7px;font-size:10.1px;color:#dfe1e5;">code30_560_set_title.py</div>
<svg style="left:54.5px;top:522.9px" width="13" height="13" viewBox="0 0 12 12" ><path d="M5.9 0.5C3.2 0.5 3.4 1.7 3.4 1.7V3H6V3.4H2.3C2.3 3.4 0.5 3.2 0.5 6 0.5 8.8 2.1 8.7 2.1 8.7H3V7.4C3 7.4 2.9 5.8 4.6 5.8H7.4C7.4 5.8 9 5.8 9 4.3V1.9C9 1.9 9.2 0.5 5.9 0.5Z" fill="#4a8bdb"/><path d="M6.1 11.5C8.8 11.5 8.6 10.3 8.6 10.3V9H6V8.6H9.7C9.7 8.6 11.5 8.8 11.5 6 11.5 3.2 9.9 3.3 9.9 3.3H9V4.6C9 4.6 9.1 6.2 7.4 6.2H4.6C4.6 6.2 3 6.2 3 7.7V10.1C3 10.1 2.8 11.5 6.1 11.5Z" fill="#f2c94c"/><circle cx="4.6" cy="1.9" r="0.55" fill="#292c2f"/><circle cx="7.4" cy="10.1" r="0.55" fill="#292c2f"/></svg>
<div class="ui" style="left:71px;top:525.3px;font-size:10.1px;color:#dfe1e5;">code30_570_major_grid.py</div>
<svg style="left:54.5px;top:544.5px" width="13" height="13" viewBox="0 0 12 12" ><path d="M5.9 0.5C3.2 0.5 3.4 1.7 3.4 1.7V3H6V3.4H2.3C2.3 3.4 0.5 3.2 0.5 6 0.5 8.8 2.1 8.7 2.1 8.7H3V7.4C3 7.4 2.9 5.8 4.6 5.8H7.4C7.4 5.8 9 5.8 9 4.3V1.9C9 1.9 9.2 0.5 5.9 0.5Z" fill="#4a8bdb"/><path d="M6.1 11.5C8.8 11.5 8.6 10.3 8.6 10.3V9H6V8.6H9.7C9.7 8.6 11.5 8.8 11.5 6 11.5 3.2 9.9 3.3 9.9 3.3H9V4.6C9 4.6 9.1 6.2 7.4 6.2H4.6C4.6 6.2 3 6.2 3 7.7V10.1C3 10.1 2.8 11.5 6.1 11.5Z" fill="#f2c94c"/><circle cx="4.6" cy="1.9" r="0.55" fill="#292c2f"/><circle cx="7.4" cy="10.1" r="0.55" fill="#292c2f"/></svg>
<div class="ui" style="left:71px;top:546.9px;font-size:10.1px;color:#dfe1e5;">code30_580_minor_grid.py</div>
<svg style="left:54.5px;top:566.1px" width="13" height="13" viewBox="0 0 12 12" ><path d="M5.9 0.5C3.2 0.5 3.4 1.7 3.4 1.7V3H6V3.4H2.3C2.3 3.4 0.5 3.2 0.5 6 0.5 8.8 2.1 8.7 2.1 8.7H3V7.4C3 7.4 2.9 5.8 4.6 5.8H7.4C7.4 5.8 9 5.8 9 4.3V1.9C9 1.9 9.2 0.5 5.9 0.5Z" fill="#4a8bdb"/><path d="M6.1 11.5C8.8 11.5 8.6 10.3 8.6 10.3V9H6V8.6H9.7C9.7 8.6 11.5 8.8 11.5 6 11.5 3.2 9.9 3.3 9.9 3.3H9V4.6C9 4.6 9.1 6.2 7.4 6.2H4.6C4.6 6.2 3 6.2 3 7.7V10.1C3 10.1 2.8 11.5 6.1 11.5Z" fill="#f2c94c"/><circle cx="4.6" cy="1.9" r="0.55" fill="#292c2f"/><circle cx="7.4" cy="10.1" r="0.55" fill="#292c2f"/></svg>
<div class="ui" style="left:71px;top:568.5px;font-size:10.1px;color:#dfe1e5;">code30_590_legend.py</div>
<svg style="left:54.5px;top:587.7px" width="13" height="13" viewBox="0 0 12 12" ><path d="M5.9 0.5C3.2 0.5 3.4 1.7 3.4 1.7V3H6V3.4H2.3C2.3 3.4 0.5 3.2 0.5 6 0.5 8.8 2.1 8.7 2.1 8.7H3V7.4C3 7.4 2.9 5.8 4.6 5.8H7.4C7.4 5.8 9 5.8 9 4.3V1.9C9 1.9 9.2 0.5 5.9 0.5Z" fill="#4a8bdb"/><path d="M6.1 11.5C8.8 11.5 8.6 10.3 8.6 10.3V9H6V8.6H9.7C9.7 8.6 11.5 8.8 11.5 6 11.5 3.2 9.9 3.3 9.9 3.3H9V4.6C9 4.6 9.1 6.2 7.4 6.2H4.6C4.6 6.2 3 6.2 3 7.7V10.1C3 10.1 2.8 11.5 6.1 11.5Z" fill="#f2c94c"/><circle cx="4.6" cy="1.9" r="0.55" fill="#292c2f"/><circle cx="7.4" cy="10.1" r="0.55" fill="#292c2f"/></svg>
<div class="ui" style="left:71px;top:590.1px;font-size:10.1px;color:#dfe1e5;">code30_600_background.py</div>
<svg style="left:22px;top:613.8px" width="8" height="5" viewBox="0 0 8 5" ><path d="M0.5 0.5L4.0 4.5L7.5 0.5" fill="none" stroke="#ced0d6" stroke-width="1.1"/></svg>
<svg style="left:38px;top:609.8px" width="14" height="12" viewBox="0 0 14 12" ><path d="M0.8 1.8C0.8 1.2 1.2 0.8 1.8 0.8H5L6.5 2.5H12.2C12.8 2.5 13.2 2.9 13.2 3.5V10.2C13.2 10.8 12.8 11.2 12.2 11.2H1.8C1.2 11.2 0.8 10.8 0.8 10.2Z" fill="none" stroke="#ced0d6" stroke-width="1.1"/></svg>
<div class="ui" style="left:54px;top:611.7px;font-size:10.1px;color:#dfe1e5;">md</div>
<svg style="left:40px;top:633.4px" width="5" height="8" viewBox="0 0 5 8" ><path d="M0.5 0.5L4.5 4L0.5 7.5" fill="none" stroke="#ced0d6" stroke-width="1.1"/></svg>
<svg style="left:55px;top:631.4px" width="14" height="12" viewBox="0 0 14 12" ><path d="M0.8 1.8C0.8 1.2 1.2 0.8 1.8 0.8H5L6.5 2.5H12.2C12.8 2.5 13.2 2.9 13.2 3.5V10.2C13.2 10.8 12.8 11.2 12.2 11.2H1.8C1.2 11.2 0.8 10.8 0.8 10.2Z" fill="none" stroke="#ced0d6" stroke-width="1.1"/></svg>
<div class="ui" style="left:71px;top:633.3px;font-size:10.1px;color:#dfe1e5;">img</div>
<div class="ui" style="left:54.5px;top:654.5px;font-size:10px;color:#6f9be6;font-weight:bold;letter-spacing:-0.8px">M↓</div>
<div class="ui" style="left:71px;top:654.9px;font-size:10.1px;color:#dfe1e5;">md30_step3_init.md</div>
<div class="a" style="left:226px;top:215px;width:7px;height:295px;background:#4a4c50;border-radius:3px"></div>
</div>
<div class="a" style="left:272px;top:171px;width:455px;height:706px;background:#1f2020;"></div>
<div class="a" style="left:272px;top:208px;width:455px;height:1px;background:#292c2f;"></div>
<div class="clip" style="left:272px;top:171px;width:455px;height:37px;">
<div class="ui" style="left:-0.8px;top:14.5px;font-size:10.4px;color:#dfe1e5;">0_accesor_dt_timedelta_components.py</div>
<svg style="left:224px;top:13px" width="14" height="14" viewBox="0 0 12 12" ><path d="M5.9 0.5C3.2 0.5 3.4 1.7 3.4 1.7V3H6V3.4H2.3C2.3 3.4 0.5 3.2 0.5 6 0.5 8.8 2.1 8.7 2.1 8.7H3V7.4C3 7.4 2.9 5.8 4.6 5.8H7.4C7.4 5.8 9 5.8 9 4.3V1.9C9 1.9 9.2 0.5 5.9 0.5Z" fill="#4a8bdb"/><path d="M6.1 11.5C8.8 11.5 8.6 10.3 8.6 10.3V9H6V8.6H9.7C9.7 8.6 11.5 8.8 11.5 6 11.5 3.2 9.9 3.3 9.9 3.3H9V4.6C9 4.6 9.1 6.2 7.4 6.2H4.6C4.6 6.2 3 6.2 3 7.7V10.1C3 10.1 2.8 11.5 6.1 11.5Z" fill="#f2c94c"/><circle cx="4.6" cy="1.9" r="0.55" fill="#292c2f"/><circle cx="7.4" cy="10.1" r="0.55" fill="#292c2f"/></svg>
<div class="ui" style="left:242px;top:14.5px;font-size:10px;color:#dfe1e5;">code30_210_accesor_str.py</div>
<svg style="left:378px;top:15px" width="8" height="8" viewBox="0 0 8 8" ><path d="M0.5 0.5L7.5 7.5M7.5 0.5L0.5 7.5" stroke="#8c8f94" stroke-width="1"/></svg>
<div class="a" style="left:213px;top:34px;width:182px;height:3px;background:#3574f0;"></div>
<svg style="left:409px;top:17px" width="9" height="5" viewBox="0 0 9 5" ><path d="M0.5 0.5L4.5 4.5L8.5 0.5" fill="none" stroke="#ced0d6" stroke-width="1.1"/></svg>
<div class="a" style="left:436.5px;top:13.5px;width:2px;height:2px;background:#ced0d6;border-radius:1px"></div>
<div class="a" style="left:436.5px;top:18.5px;width:2px;height:2px;background:#ced0d6;border-radius:1px"></div>
<div class="a" style="left:436.5px;top:23.5px;width:2px;height:2px;background:#ced0d6;border-radius:1px"></div>
</div>
<div class="clip" style="left:272px;top:209px;width:455px;height:668px;">
<div class="a" style="left:0px;top:0px;width:432px;height:19px;background:#26282e;"></div>
<div class="a" style="left:62px;top:658px;width:171px;height:7px;background:#414446;border-radius:1px"></div>
<div class="a" style="left:59px;top:0px;width:1px;height:668px;background:#26282b;"></div>
<div class="a" style="left:90.5px;top:117.9px;width:1px;height:19.8px;background:#2d3035;"></div>
<div class="a" style="left:90.5px;top:177.3px;width:1px;height:39.6px;background:#2d3035;"></div>
<div class="a" style="left:90.5px;top:256.5px;width:1px;height:39.6px;background:#2d3035;"></div>
<div class="mono" style="left:20.3px;top:1.1px;color:#a1a3ab">1</div>
<div class="mono" style="left:62px;top:1.1px"><span style="color:#5f826b;font-style:italic">""" str <span class="j">アクセサの様々な例</span> """</span></div>
<div class="mono" style="left:20.3px;top:20.9px;color:#474a50">2</div>
<div class="mono" style="left:62px;top:20.9px"><span style="color:#cf8e6d;">import</span><span style="color:#bcbec4;"> pandas </span><span style="color:#cf8e6d;">as</span><span style="color:#bcbec4;"> pd</span></div>
<div class="mono" style="left:20.3px;top:40.7px;color:#474a50">3</div>
<div class="mono" style="left:20.3px;top:60.5px;color:#474a50">4</div>
<div class="mono" style="left:62px;top:60.5px"><span style="color:#7a7e85;"># <span class="j">サンプルデータの作成</span></span></div>
<div class="mono" style="left:20.3px;top:80.3px;color:#474a50">5</div>
<div class="mono" style="left:62px;top:80.3px"><span style="color:#bcbec4;">data = {</span></div>
<div class="mono" style="left:20.3px;top:100.1px;color:#474a50">6</div>
<div class="mono" style="left:62px;top:100.1px"><span style="color:#bcbec4;">    </span><span style="color:#6aab73;">'<span class="j">国コード</span>'</span><span style="color:#bcbec4;">: [</span></div>
<div class="mono" style="left:20.3px;top:119.9px;color:#474a50">7</div>
<div class="mono" style="left:62px;top:119.9px"><span style="color:#bcbec4;">        </span><span style="color:#6aab73;">'JP'</span><span style="color:#bcbec4;">, </span><span style="color:#6aab73;">'US'</span><span style="color:#bcbec4;">, </span><span style="color:#6aab73;">'GB'</span><span style="color:#bcbec4;">, </span><span style="color:#6aab73;">'FR'</span><span style="color:#bcbec4;">, </span><span style="color:#6aab73;">'DE'</span><span style="color:#bcbec4;">, </span><span style="color:#6aab73;">'CN'</span><span style="color:#bcbec4;">, </span><span style="color:#6aab73;">'KR'</span><span style="color:#bcbec4;">, </span><span style="color:#6aab73;">'IN'</span><span style="color:#bcbec4;">, </span><span style="color:#6aab73;">'AU'</span></div>
<div class="mono" style="left:20.3px;top:139.7px;color:#474a50">8</div>
<div class="mono" style="left:62px;top:139.7px"><span style="color:#bcbec4;">    ],</span></div>
<div class="mono" style="left:20.3px;top:159.5px;color:#474a50">9</div>
<div class="mono" style="left:62px;top:159.5px"><span style="color:#bcbec4;">    </span><span style="color:#6aab73;">'<span class="j">国名英語</span>'</span><span style="color:#bcbec4;">: [</span></div>
<div class="mono" style="left:13.1px;top:179.3px;color:#474a50">10</div>
<div class="mono" style="left:62px;top:179.3px"><span style="color:#bcbec4;">        </span><span style="color:#6aab73;">'Japan'</span><span style="color:#bcbec4;">, </span><span style="color:#6aab73;">'United States'</span><span style="color:#bcbec4;">, </span><span style="color:#6aab73;">'United Kingdom'</span><span style="color:#bcbec4;">, </span><span style="color:#6aab73;">'France'</span><span style="color:#bcbec4;">, </span><span style="color:#6aab73;">'Germany'</span></div>
<div class="mono" style="left:13.1px;top:199.1px;color:#474a50">11</div>
<div class="mono" style="left:62px;top:199.1px"><span style="color:#bcbec4;">        </span><span style="color:#6aab73;">'Spain'</span><span style="color:#bcbec4;">, </span><span style="color:#6aab73;">'Canada'</span><span style="color:#bcbec4;">, </span><span style="color:#6aab73;">'Australia'</span></div>
<div class="mono" style="left:13.1px;top:218.9px;color:#474a50">12</div>
<div class="mono" style="left:62px;top:218.9px"><span style="color:#bcbec4;">    ],</span></div>
<div class="mono" style="left:13.1px;top:238.7px;color:#474a50">13</div>
<div class="mono" style="left:62px;top:238.7px"><span style="color:#bcbec4;">    </span><span style="color:#6aab73;">'<span class="j">国名日本語</span>'</span><span style="color:#bcbec4;">: [</span></div>
<div class="mono" style="left:13.1px;top:258.5px;color:#474a50">14</div>
<div class="mono" style="left:62px;top:258.5px"><span style="color:#bcbec4;">        </span><span style="color:#6aab73;">'<span class="j">日本</span>'</span><span style="color:#bcbec4;">, </span><span style="color:#6aab73;">'<span class="j">アメリカ合衆国</span>'</span><span style="color:#bcbec4;">, </span><span style="color:#6aab73;">'<span class="j">イギリス</span>'</span><span style="color:#bcbec4;">, </span><span style="color:#6aab73;">'<span class="j">フランス</span>'</span><span style="color:#bcbec4;">, </span><span style="color:#6aab73;">'<span class="j">ドイツ</span>'</span></div>
<div class="mono" style="left:13.1px;top:278.3px;color:#474a50">15</div>
<div class="mono" style="left:62px;top:278.3px"><span style="color:#bcbec4;">        </span><span style="color:#6aab73;">'<span class="j">カナダ</span>'</span><span style="color:#bcbec4;">, </span><span style="color:#6aab73;">'<span class="j">オーストラリア</span>'</span></div>
<div class="mono" style="left:13.1px;top:298.1px;color:#474a50">16</div>
<div class="mono" style="left:62px;top:298.1px"><span style="color:#bcbec4;">    ]</span></div>
<div class="mono" style="left:13.1px;top:317.9px;color:#474a50">17</div>
<div class="mono" style="left:62px;top:317.9px"><span style="color:#bcbec4;">}</span></div>
<div class="mono" style="left:13.1px;top:337.7px;color:#474a50">18</div>
<div class="mono" style="left:13.1px;top:357.5px;color:#474a50">19</div>
<div class="mono" style="left:62px;top:357.5px"><span style="color:#bcbec4;">df = pd.DataFrame(data)</span></div>
<div class="mono" style="left:13.1px;top:377.3px;color:#474a50">20</div>
<div class="mono" style="left:62px;top:377.3px"><span style="color:#8888c6;">print</span><span style="color:#bcbec4;">(df)</span></div>
<div class="mono" style="left:13.1px;top:397.1px;color:#474a50">21</div>
<div class="mono" style="left:13.1px;top:416.9px;color:#474a50">22</div>
<div class="mono" style="left:62px;top:416.9px"><span style="color:#7a7e85;"># <span class="j">小文字化</span></span></div>
<div class="mono" style="left:13.1px;top:436.7px;color:#474a50">23</div>
<div class="mono" style="left:62px;top:436.7px"><span style="color:#bcbec4;">df[</span><span style="color:#6aab73;">'<span class="j">国名英語小文字</span>'</span><span style="color:#bcbec4;">] = df[</span><span style="color:#6aab73;">'<span class="j">国名英語</span>'</span><span style="color:#bcbec4;">].str.lower()</span></div>
<div class="mono" style="left:13.1px;top:456.5px;color:#474a50">24</div>
<div class="mono" style="left:62px;top:456.5px"><span style="color:#8888c6;">print</span><span style="color:#bcbec4;">(df[[</span><span style="color:#6aab73;">'<span class="j">国名英語</span>'</span><span style="color:#bcbec4;">, </span><span style="color:#6aab73;">'<span class="j">国名英語小文字</span>'</span><span style="color:#bcbec4;">]])</span></div>
<div class="mono" style="left:13.1px;top:476.3px;color:#474a50">25</div>
<div class="mono" style="left:13.1px;top:496.1px;color:#474a50">26</div>
<div class="mono" style="left:62px;top:496.1px"><span style="color:#7a7e85;"># <span class="j">大文字化</span></span></div>
<div class="mono" style="left:13.1px;top:515.9px;color:#474a50">27</div>
<div class="mono" style="left:62px;top:515.9px"><span style="color:#bcbec4;">df[</span><span style="color:#6aab73;">'<span class="j">国名日本語大文字</span>'</span><span style="color:#bcbec4;">] = df[</span><span style="color:#6aab73;">'<span class="j">国名日本語</span>'</span><span style="color:#bcbec4;">].str.upper()</span></div>
<div class="mono" style="left:13.1px;top:535.7px;color:#474a50">28</div>
<div class="mono" style="left:62px;top:535.7px"><span style="color:#8888c6;">print</span><span style="color:#bcbec4;">( df[[</span><span style="color:#6aab73;">'<span class="j">国名日本語</span>'</span><span style="color:#bcbec4;">, </span><span style="color:#6aab73;">'<span class="j">国名日本語大文字</span>'</span><span style="color:#bcbec4;">]])</span></div>
<div class="mono" style="left:13.1px;top:555.5px;color:#474a50">29</div>
<div class="mono" style="left:13.1px;top:575.3px;color:#474a50">30</div>
<div class="mono" style="left:62px;top:575.3px"><span style="color:#7a7e85;"># <span class="j">前後の空白除去（意図的に空白を含める）</span></span></div>
<div class="mono" style="left:13.1px;top:595.1px;color:#474a50">31</div>
<div class="mono" style="left:62px;top:595.1px"><span style="color:#bcbec4;">df[</span><span style="color:#6aab73;">'<span class="j">国名英語</span>'</span><span style="color:#bcbec4;">] = df[</span><span style="color:#6aab73;">'<span class="j">国名英語</span>'</span><span style="color:#bcbec4;">].str.strip()</span></div>
<div class="mono" style="left:13.1px;top:614.9px;color:#474a50">32</div>
<div class="mono" style="left:62px;top:614.9px"><span style="color:#bcbec4;">df[</span><span style="color:#6aab73;">'<span class="j">国名英語ストリップ</span>'</span><span style="color:#bcbec4;">] = df[</span><span style="color:#6aab73;">'<span class="j">国名英語</span>'</span><span style="color:#bcbec4;">].str.strip()</span></div>
<div class="mono" style="left:13.1px;top:634.7px;color:#474a50">33</div>
<div class="mono" style="left:62px;top:634.7px"><span style="color:#8888c6;">print</span><span style="color:#bcbec4;">(df[[</span><span style="color:#6aab73;">'<span class="j">国名英語</span>'</span><span style="color:#bcbec4;">, </span><span style="color:#6aab73;">'<span class="j">国名英語ストリップ</span>'</span><span style="color:#bcbec4;">]])</span></div>
<div class="mono" style="left:13.1px;top:654.5px;color:#474a50">34</div>
<div class="a" style="left:232px;top:1.5px;width:1.5px;height:16px;background:#ced0d6;"></div>
<svg style="left:68px;top:23.5px" width="11" height="17" viewBox="0 0 11 17" ><circle cx="5.5" cy="6" r="4.6" fill="#f0b94a"/><rect x="3.3" y="10.5" width="4.4" height="2.2" fill="#f0b94a"/><rect x="3.8" y="13.5" width="3.4" height="1.5" fill="#c9a14a"/></svg>
<svg style="left:437px;top:7px" width="11" height="9" viewBox="0 0 11 9" ><path d="M1 4.5L4 7.5L10 1" fill="none" stroke="#5fb865" stroke-width="1.6"/></svg>
<div class="a" style="left:446px;top:24px;width:7.5px;height:381px;background:#414446;border-radius:1px"></div>
</div>
<div class="a" style="left:727px;top:171px;width:677px;height:706px;background:#292c2f;"></div>
<div class="a" style="left:727px;top:208.5px;width:677px;height:1px;background:#1f2020;"></div>
<div class="ui" style="left:739px;top:187.3px;font-size:10.5px;color:#dfe1e5;font-weight:bold">Run</div>
<svg style="left:784px;top:184.5px" width="14" height="14" viewBox="0 0 12 12" opacity="0.7"><path d="M5.9 0.5C3.2 0.5 3.4 1.7 3.4 1.7V3H6V3.4H2.3C2.3 3.4 0.5 3.2 0.5 6 0.5 8.8 2.1 8.7 2.1 8.7H3V7.4C3 7.4 2.9 5.8 4.6 5.8H7.4C7.4 5.8 9 5.8 9 4.3V1.9C9 1.9 9.2 0.5 5.9 0.5Z" fill="#4a8bdb"/><path d="M6.1 11.5C8.8 11.5 8.6 10.3 8.6 10.3V9H6V8.6H9.7C9.7 8.6 11.5 8.8 11.5 6 11.5 3.2 9.9 3.3 9.9 3.3H9V4.6C9 4.6 9.1 6.2 7.4 6.2H4.6C4.6 6.2 3 6.2 3 7.7V10.1C3 10.1 2.8 11.5 6.1 11.5Z" fill="#f2c94c"/><circle cx="4.6" cy="1.9" r="0.55" fill="#292c2f"/><circle cx="7.4" cy="10.1" r="0.55" fill="#292c2f"/></svg>
<div class="ui" style="left:801px;top:187.3px;font-size:10.3px;color:#dfe1e5;">code30_250_accesor_dt_timedelta_components</div>
<svg style="left:1034px;top:188px" width="8" height="8" viewBox="0 0 8 8" ><path d="M0.5 0.5L7.5 7.5M7.5 0.5L0.5 7.5" stroke="#6f7277" stroke-width="1"/></svg>
<div class="a" style="left:772px;top:206.8px;width:278px;height:2.4px;background:#5e6166;border-radius:1px"></div>
<div class="a" style="left:1359px;top:185.5px;width:2px;height:2px;background:#ced0d6;border-radius:1px"></div>
<div class="a" style="left:1359px;top:190.5px;width:2px;height:2px;background:#ced0d6;border-radius:1px"></div>
<div class="a" style="left:1359px;top:195.5px;width:2px;height:2px;background:#ced0d6;border-radius:1px"></div>
<div class="a" style="left:1378px;top:191px;width:12px;height:1.3px;background:#ced0d6;"></div>
<svg style="left:738px;top:218px" width="15" height="14" viewBox="0 0 15 14" ><path d="M10.5 3.2A5.5 5.5 0 1 0 5.5 12" fill="none" stroke="#ced0d6" stroke-width="1.2"/><path d="M8 1.5H11V4.5" fill="none" stroke="#ced0d6" stroke-width="1.2"/><path d="M7.5 7.2L13.5 10.2L7.5 13.2Z" fill="none" stroke="#5fb865" stroke-width="1.2" stroke-linejoin="round"/></svg>
<div class="a" style="left:764px;top:219.5px;width:11px;height:11px;background:#5c5f64;border-radius:1.5px"></div>
<div class="a" style="left:784.5px;top:215px;width:1px;height:20px;background:#3c3e42;"></div>
<div class="a" style="left:797.5px;top:219.5px;width:2px;height:2px;background:#ced0d6;border-radius:1px"></div>
<div class="a" style="left:797.5px;top:224.5px;width:2px;height:2px;background:#ced0d6;border-radius:1px"></div>
<div class="a" style="left:797.5px;top:229.5px;width:2px;height:2px;background:#ced0d6;border-radius:1px"></div>
<div class="a" style="left:727px;top:239.5px;width:677px;height:0.5px;background:#26282b;"></div>
<svg style="left:740px;top:250px" width="10" height="14" viewBox="0 0 10 14" ><path d="M5 13V1.5M1 5.5L5 1.5L9 5.5" fill="none" stroke="#5f6268" stroke-width="1.2"/></svg>
<svg style="left:740px;top:274px" width="10" height="14" viewBox="0 0 10 14" ><path d="M5 1V12.5M1 8.5L5 12.5L9 8.5" fill="none" stroke="#5f6268" stroke-width="1.2"/></svg>
<svg style="left:738px;top:298px" width="14" height="13" viewBox="0 0 14 13" ><path d="M1 1.5H13M1 6H11.5A2 2 0 0 1 11.5 10H7M1 10.5H4.5M8.5 8L6.5 10L8.5 12" fill="none" stroke="#ced0d6" stroke-width="1.1"/></svg>
<svg style="left:738px;top:321px" width="14" height="13" viewBox="0 0 14 13" ><path d="M1 1.5H6M1 5.5H6M1 12H13M9.5 1V9.5M6.8 7L9.5 9.7L12.2 7" fill="none" stroke="#ced0d6" stroke-width="1.1"/></svg>
<svg style="left:738px;top:344px" width="14" height="14" viewBox="0 0 14 14" ><rect x="3" y="1" width="8" height="4" fill="none" stroke="#ced0d6" stroke-width="1.1"/><path d="M3 10.5H1V5H13V10.5H11M3 8.5H11V13H3Z" fill="none" stroke="#ced0d6" stroke-width="1.1" stroke-linejoin="round"/></svg>
<svg style="left:739px;top:367px" width="12" height="14" viewBox="0 0 12 14" ><path d="M1 3H11M4 3V1.2H8V3M2.2 3L3 13H9L9.8 3M5 5.5V10.5M7 5.5V10.5" fill="none" stroke="#ced0d6" stroke-width="1.1" stroke-linejoin="round"/></svg>
<div class="a" style="left:763px;top:240px;width:640px;height:637px;background:#1f2020;"></div>
<div class="clip" style="left:763px;top:240px;width:640px;height:637px;">
<div class="a" style="left:39px;top:278px;width:601px;height:20px;background:#214283;"></div>
<div class="a" style="left:10px;top:298px;width:630px;height:217.5px;background:#214283;"></div>
<div class="a" style="left:10px;top:515.5px;width:532.8px;height:20.5px;background:#214283;"></div>
<div class="a" style="left:10px;top:626px;width:362px;height:8px;background:#414446;border-radius:1px"></div>
<div class="mono" style="left:10px;top:2.6px;color:#bcbec4">D:\projects\lessons\pd_plt\.venv\Scripts\python.exe D:\projects\lessons\pd_plt\lessons\30_step3\code\code30_250_accesor_dt_timedelta_components.py</div>
<div class="mono" style="left:10px;top:22.4px;color:#bcbec4">              <span class="j">作業時間</span></div>
<div class="mono" style="left:10px;top:42.2px;color:#bcbec4">0  0 days 01:30:15</div>
<div class="mono" style="left:10px;top:62.0px;color:#bcbec4">1  0 days 02:15:30</div>
<div class="mono" style="left:10px;top:81.8px;color:#bcbec4">2  0 days 00:45:10</div>
<div class="mono" style="left:10px;top:101.6px;color:#bcbec4">3  0 days 03:10:45</div>
<div class="mono" style="left:10px;top:121.4px;color:#bcbec4">4  0 days 01:05:30</div>
<div class="mono" style="left:10px;top:141.2px;color:#bcbec4">5  0 days 00:30:20</div>
<div class="mono" style="left:10px;top:161.0px;color:#bcbec4">6  0 days 02:45:00</div>
<div class="mono" style="left:10px;top:180.8px;color:#bcbec4">7  0 days 01:20:15</div>
<div class="mono" style="left:10px;top:200.6px;color:#bcbec4">8  0 days 04:00:30</div>
<div class="mono" style="left:10px;top:220.4px;color:#bcbec4">9  0 days 01:10:45</div>
<div class="mono" style="left:10px;top:240.2px;color:#bcbec4">10 0 days 00:50:10</div>
<div class="mono" style="left:10px;top:260.0px;color:#bcbec4">11 0 days 02:30:00</div>
<div class="mono" style="left:10px;top:279.8px;color:#bcbec4">    days  hours  minutes  seconds  milliseconds  microseconds  nanoseconds</div>
<div class="mono" style="left:10px;top:299.6px;color:#bcbec4">0      0      1       30       15             0             0            0</div>
<div class="mono" style="left:10px;top:319.4px;color:#bcbec4">1      0      2       15       30             0             0            0</div>
<div class="mono" style="left:10px;top:339.2px;color:#bcbec4">2      0      0       45       10             0             0            0</div>
<div class="mono" style="left:10px;top:359.0px;color:#bcbec4">3      0      3       10       45             0             0            0</div>
<div class="mono" style="left:10px;top:378.8px;color:#bcbec4">4      0      1        5       30             0             0            0</div>
<div class="mono" style="left:10px;top:398.6px;color:#bcbec4">5      0      0       30       20             0             0            0</div>
<div class="mono" style="left:10px;top:418.4px;color:#bcbec4">6      0      2       45        0             0             0            0</div>
<div class="mono" style="left:10px;top:438.2px;color:#bcbec4">7      0      1       20       15             0             0            0</div>
<div class="mono" style="left:10px;top:458.0px;color:#bcbec4">8      0      4        0       30             0             0            0</div>
<div class="mono" style="left:10px;top:477.8px;color:#bcbec4">9      0      1       10       45             0             0            0</div>
<div class="mono" style="left:10px;top:497.6px;color:#bcbec4">10     0      0       50       10             0             0            0</div>
<div class="mono" style="left:10px;top:517.4px;color:#bcbec4">11     0      2       30        0             0             0            0</div>
<div class="mono" style="left:10px;top:537.2px;color:#bcbec4">              <span class="j">作業時間</span>  days  hours  minutes  seconds</div>
<div class="mono" style="left:10px;top:557.0px;color:#bcbec4">0  0 days 01:30:15     0      1       30       15</div>
<div class="mono" style="left:10px;top:576.8px;color:#bcbec4">1  0 days 02:15:30     0      2       15       30</div>
<div class="mono" style="left:10px;top:596.6px;color:#bcbec4">2  0 days 00:45:10     0      0       45       10</div>
<div class="mono" style="left:10px;top:616.4px;color:#bcbec4">3  0 days 03:10:45     0      3       10       45</div>
<div class="mono" style="left:10px;top:636.2px;color:#bcbec4">4  0 days 01:05:30     0      1        5       30</div>
<div class="a" style="left:632px;top:2px;width:7.5px;height:465px;background:#414446;border-radius:1px"></div>
</div>
<div class="a" style="left:1403.5px;top:171px;width:1px;height:706px;background:#1f2020;"></div>
<svg style="left:1413px;top:181px" width="18" height="18" viewBox="0 0 18 18" ><path d="M3 13V8A6 6 0 0 1 12 3" fill="none" stroke="#ced0d6" stroke-width="1.3"/><path d="M15 8V13M1.5 13H16.5M7.3 15.5H10.7" fill="none" stroke="#ced0d6" stroke-width="1.3" stroke-linecap="round"/><circle cx="15" cy="3.5" r="3" fill="#548af7" stroke="#292c2f" stroke-width="0.8"/></svg>
<svg style="left:1414px;top:219px" width="17" height="15" viewBox="0 0 17 15" ><path d="M10.5 7.6C10.5 6.3 9.3 5.6 8 5.6C6.4 5.6 5.2 6.7 5.2 8C5.2 9.6 6.7 10.6 8.4 10.6C11 10.6 13.2 9 13.2 6.8C13.2 4 10.6 2 7.8 2C4.2 2 1.3 4.6 1.3 7.8C1.3 11.4 4.6 13.6 8.4 13.6H14.5" fill="none" stroke="#ced0d6" stroke-width="1.4" stroke-linecap="round"/></svg>
<svg style="left:1415px;top:254px" width="14" height="17" viewBox="0 0 14 17" ><ellipse cx="7" cy="3" rx="6" ry="2.3" fill="none" stroke="#ced0d6" stroke-width="1.3"/><path d="M1 3V14C1 15.3 3.7 16.3 7 16.3S13 15.3 13 14V3M1 6.8C1 8 3.7 9 7 9S13 8 13 6.8M1 10.5C1 11.7 3.7 12.7 7 12.7S13 11.7 13 10.5" fill="none" stroke="#ced0d6" stroke-width="1.3"/></svg>
<svg style="left:1413px;top:289px" width="18" height="17" viewBox="0 0 18 17" ><path d="M3.2 6.5C1.8 7.5 1.2 9.2 1.2 11C1.2 14.5 5 15.8 9 15.8S16.8 14.5 16.8 11C16.8 9.2 16.2 7.5 14.8 6.5" fill="none" stroke="#ced0d6" stroke-width="1.8"/><circle cx="6" cy="4.6" r="3.4" fill="none" stroke="#ced0d6" stroke-width="1.8"/><circle cx="12" cy="4.6" r="3.4" fill="none" stroke="#ced0d6" stroke-width="1.8"/><rect x="5.3" y="9.6" width="2.2" height="3.4" rx="0.6" fill="#ced0d6"/><rect x="10.5" y="9.6" width="2.2" height="3.4" rx="0.6" fill="#ced0d6"/></svg>
<svg style="left:1414px;top:326px" width="17" height="16" viewBox="0 0 17 16" ><path d="M3.5 15V10M7.8 15V8.5M12 15V10.5M1 7.5L7 2.5L10.5 6L15.5 1.5" fill="none" stroke="#ced0d6" stroke-width="1.4" stroke-linecap="round" stroke-linejoin="round"/></svg>
<svg style="left:1413px;top:361px" width="18" height="17" viewBox="0 0 18 17" ><circle cx="6.2" cy="4.6" r="3.2" fill="none" stroke="#ced0d6" stroke-width="1.7"/><path d="M10.2 2.6A3.2 3.2 0 0 1 15.5 5" fill="none" stroke="#ced0d6" stroke-width="1.7"/><path d="M3 8.8C1.5 10 1.2 12.5 2.5 14C3.5 15.2 5.5 15.8 7.5 15.8" fill="none" stroke="#ced0d6" stroke-width="1.8" stroke-linecap="round"/><rect x="5.2" y="10" width="2" height="2.8" rx="0.5" fill="#ced0d6"/><path d="M9.8 9.2H17.2V14.5H14.5L12.5 16.5V14.5H9.8Z" fill="#ced0d6" stroke="#292c2f" stroke-width="0.8"/></svg>
<svg style="left:1413px;top:397px" width="17" height="18" viewBox="0 0 17 18" ><path d="M8.5 14H1.5V1.5H14.5V8M1.5 5H14.5M6 1.5V14M10.5 1.5V8" fill="none" stroke="#ced0d6" stroke-width="1.3"/><ellipse cx="12" cy="13.5" rx="4.3" ry="3" fill="#292c2f" stroke="#ced0d6" stroke-width="1.2"/><circle cx="12" cy="13.5" r="1" fill="#ced0d6"/></svg>
<div class="a" style="left:1408.5px;top:428px;width:27px;height:27px;background:#43454a;border-radius:6px"></div>
<svg style="left:1415px;top:434.5px" width="14" height="15" viewBox="0 0 14 15" ><path d="M1.5 1L12.5 7.5L1.5 14Z" fill="none" stroke="#dfe1e5" stroke-width="1.4" stroke-linejoin="round"/></svg>
<svg style="left:1413px;top:469px" width="18" height="18" viewBox="0 0 18 18" ><ellipse cx="8.5" cy="10.5" rx="4" ry="5" fill="none" stroke="#ced0d6" stroke-width="1.3"/><path d="M6 5L7 6.2M11 5L10 6.2M1.5 10.5H4.5M12.5 10.5H15.5M2 6.5L4.7 8M15 6.5L12.3 8M2 15L4.7 13.3M15 15L12.3 13.3M4.5 10.5H12.5" fill="none" stroke="#ced0d6" stroke-width="1.2"/><circle cx="14.5" cy="3.5" r="3" fill="#5fb865" stroke="#292c2f" stroke-width="0.8"/></svg>
<div class="a" style="left:0px;top:876.5px;width:1440px;height:1px;background:#1f2020;"></div>
<svg style="left:12px;top:885px" width="8" height="9" viewBox="0 0 8 9" ><rect x="0.7" y="0.7" width="6.6" height="7.6" rx="1.6" fill="none" stroke="#548af7" stroke-width="1.3"/></svg>
<div class="ui" style="left:23px;top:884.5px;font-size:10.1px;color:#a8abb0;">pd_plt</div>
<svg style="left:62px;top:884.5px" width="6" height="9" viewBox="0 0 6 9" ><path d="M0.7 0.7L5 4.5L0.7 8.3" fill="none" stroke="#a3a6ab" stroke-width="1.2"/></svg>
<svg style="left:118px;top:884.5px" width="6" height="9" viewBox="0 0 6 9" ><path d="M0.7 0.7L5 4.5L0.7 8.3" fill="none" stroke="#a3a6ab" stroke-width="1.2"/></svg>
<svg style="left:181px;top:884.5px" width="6" height="9" viewBox="0 0 6 9" ><path d="M0.7 0.7L5 4.5L0.7 8.3" fill="none" stroke="#a3a6ab" stroke-width="1.2"/></svg>
<svg style="left:225px;top:884.5px" width="6" height="9" viewBox="0 0 6 9" ><path d="M0.7 0.7L5 4.5L0.7 8.3" fill="none" stroke="#a3a6ab" stroke-width="1.2"/></svg>
<div class="ui" style="left:75px;top:884.5px;font-size:10.1px;color:#a8abb0;">lessons</div>
<div class="ui" style="left:130px;top:884.5px;font-size:10.1px;color:#a8abb0;">30_step3</div>
<div class="ui" style="left:192px;top:884.5px;font-size:10.1px;color:#a8abb0;">code</div>
<svg style="left:238px;top:883px" width="14" height="14" viewBox="0 0 12 12" ><path d="M5.9 0.5C3.2 0.5 3.4 1.7 3.4 1.7V3H6V3.4H2.3C2.3 3.4 0.5 3.2 0.5 6 0.5 8.8 2.1 8.7 2.1 8.7H3V7.4C3 7.4 2.9 5.8 4.6 5.8H7.4C7.4 5.8 9 5.8 9 4.3V1.9C9 1.9 9.2 0.5 5.9 0.5Z" fill="#4a8bdb"/><path d="M6.1 11.5C8.8 11.5 8.6 10.3 8.6 10.3V9H6V8.6H9.7C9.7 8.6 11.5 8.8 11.5 6 11.5 3.2 9.9 3.3 9.9 3.3H9V4.6C9 4.6 9.1 6.2 7.4 6.2H4.6C4.6 6.2 3 6.2 3 7.7V10.1C3 10.1 2.8 11.5 6.1 11.5Z" fill="#f2c94c"/><circle cx="4.6" cy="1.9" r="0.55" fill="#292c2f"/><circle cx="7.4" cy="10.1" r="0.55" fill="#292c2f"/></svg>
<div class="ui" style="left:255px;top:884.5px;font-size:10.1px;color:#a8abb0;">code30_210_accesor_str.py</div>
<div class="ui" style="left:1075.5px;top:884.5px;font-size:10.1px;color:#a8abb0;">1:19</div>
<div class="ui" style="left:1107.5px;top:884.5px;font-size:9.2px;color:#a8abb0;">CRLF</div>
<div class="ui" style="left:1145.5px;top:884.5px;font-size:10.1px;color:#a8abb0;">UTF-8</div>
<svg style="left:1188px;top:883px" width="13" height="13" viewBox="0 0 13 13" ><path d="M9.00 6.50L12.00 6.50" stroke="#7e8187" stroke-width="1.2"/><path d="M8.27 8.27L10.39 10.39" stroke="#7e8187" stroke-width="1.2"/><path d="M6.50 9.00L6.50 12.00" stroke="#7e8187" stroke-width="1.2"/><path d="M4.73 8.27L2.61 10.39" stroke="#7e8187" stroke-width="1.2"/><path d="M4.00 6.50L1.00 6.50" stroke="#7e8187" stroke-width="1.2"/><path d="M4.73 4.73L2.61 2.61" stroke="#7e8187" stroke-width="1.2"/><path d="M6.50 4.00L6.50 1.00" stroke="#7e8187" stroke-width="1.2"/><path d="M8.27 4.73L10.39 2.61" stroke="#7e8187" stroke-width="1.2"/></svg>
<div class="ui" style="left:1216.5px;top:884.5px;font-size:10.1px;color:#a8abb0;">4 spaces</div>
<div class="ui" style="left:1270.5px;top:884.5px;font-size:10.5px;color:#a8abb0;">Python 3.13 (pd_plt)</div>
<svg style="left:1381px;top:882px" width="14" height="14" viewBox="0 0 14 14" ><rect x="0.7" y="5.5" width="9" height="7.5" rx="1.5" fill="none" stroke="#a8abb0" stroke-width="1.1"/><path d="M7.5 5.5V3.5A2.5 2.5 0 0 1 12.5 3.5V5" fill="none" stroke="#a8abb0" stroke-width="1.1"/><rect x="4" y="8.3" width="2.5" height="2" fill="#a8abb0"/></svg>
<svg style="left:1409px;top:883px" width="14" height="14" viewBox="0 0 14 14" ><circle cx="7" cy="7" r="6.2" fill="none" stroke="#c9cbd0" stroke-width="1.1"/><path d="M7 3.5V8" stroke="#c9cbd0" stroke-width="1.6"/><circle cx="7" cy="10.3" r="0.9" fill="#c9cbd0"/></svg>
<div class="a" style="left:0px;top:901.5px;width:1440px;height:43.5px;background:#dedad7;"></div>
<svg style="left:16px;top:911px" width="25" height="23" viewBox="0 0 25 23" ><circle cx="13" cy="12.5" r="8.5" fill="#f39a1e"/><circle cx="12" cy="11" r="7" fill="#f7b23b"/><ellipse cx="8" cy="7" rx="6.5" ry="4" fill="#c5d3e6"/><ellipse cx="8.5" cy="6" rx="4" ry="3.5" fill="#dfe8f3"/><ellipse cx="18" cy="18.5" rx="6.5" ry="3.5" fill="#c5d3e6"/><ellipse cx="18" cy="17.5" rx="4" ry="3" fill="#e3ebf5"/></svg>
<div class="ui" style="left:45px;top:911.5px;font-size:10px;color:#1b1b1b;">16°C</div>
<div class="ui" style="left:45px;top:925px;font-size:9px;color:#2a2a2a;">くもり時々晴れ</div>
<svg style="left:510px;top:913px" width="21" height="21" viewBox="0 0 21 21" ><defs><linearGradient id="wg" x1="0" y1="0" x2="1" y2="1"><stop offset="0" stop-color="#5fc8ff"/><stop offset="1" stop-color="#1476d6"/></linearGradient></defs><rect x="0" y="0" width="10" height="10" rx="1" fill="url(#wg)"/><rect x="11" y="0" width="10" height="10" rx="1" fill="url(#wg)"/><rect x="0" y="11" width="10" height="10" rx="1" fill="url(#wg)"/><rect x="11" y="11" width="10" height="10" rx="1" fill="url(#wg)"/></svg>
<div class="a" style="left:543.5px;top:910px;width:196.5px;height:27px;background:#f6f3ef;border-radius:14px;box-shadow:0 0 0 0.6px #cfcbc7"></div>
<svg style="left:553px;top:916px" width="14" height="14" viewBox="0 0 14 14" ><circle cx="5.8" cy="5.8" r="4.7" fill="none" stroke="#1f1f1f" stroke-width="1.6"/><path d="M9.3 9.3L13 13" stroke="#1f1f1f" stroke-width="1.7" stroke-linecap="round"/></svg>
<div class="ui" style="left:576px;top:917.5px;font-size:11px;color:#606060;">検索</div>
<svg style="left:694px;top:913px" width="40" height="23" viewBox="0 0 40 23" ><ellipse cx="22" cy="20" rx="17" ry="4.5" fill="#c9a227"/><ellipse cx="22" cy="19" rx="13" ry="3" fill="#e0b83a"/><path d="M17 19V8M27 19V9" stroke="#6b4a2a" stroke-width="1.5"/><circle cx="16" cy="7" r="5" fill="#e58a3a"/><circle cx="20" cy="5" r="3.5" fill="#d9652a"/><circle cx="28" cy="8" r="4.5" fill="#e9b23a"/><circle cx="4" cy="12" r="1.6" fill="#d9652a"/><circle cx="7" cy="16" r="1.3" fill="#e58a3a"/></svg>
<svg style="left:751px;top:914px" width="19" height="19" viewBox="0 0 19 19" ><rect x="6" y="1" width="12" height="11" rx="1.5" fill="#f2f2f2" stroke="#d0d0d0" stroke-width="0.6"/><rect x="1" y="6" width="11" height="12" rx="1.5" fill="#1c1c1c"/><rect x="6" y="6" width="6" height="6" fill="#b9b9b9"/></svg>
<svg style="left:789px;top:912px" width="25" height="22" viewBox="0 0 25 22" ><path d="M1 3C1 2 1.8 1 3 1H9L11.5 3.5H22C23.2 3.5 24 4.3 24 5.5V19C24 20.2 23.2 21 22 21H3C1.8 21 1 20.2 1 19Z" fill="#e8b520"/><rect x="1" y="6" width="23" height="15" rx="1.5" fill="#fcd44a"/><rect x="6" y="15" width="13" height="5" rx="1" fill="#2f7fd6"/></svg>
<div class="a" style="left:797px;top:938.5px;width:6px;height:2px;background:#6f6f6f;border-radius:1px"></div>
<div class="a" style="left:824px;top:906px;width:34.5px;height:34.5px;background:#f3f0ed;border-radius:5px"></div>
<svg style="left:829px;top:911px" width="24" height="24" viewBox="0 0 24 24" ><defs><linearGradient id="pg" x1="0" y1="0" x2="1" y2="1"><stop offset="0" stop-color="#21d789"/><stop offset="0.5" stop-color="#07c3f2"/><stop offset="1" stop-color="#fcf84a"/></linearGradient></defs><rect x="0" y="0" width="24" height="24" rx="3" fill="url(#pg)"/><rect x="3.5" y="3.5" width="17" height="17" fill="#000"/><rect x="6" y="16" width="6" height="1.5" fill="#fff"/></svg>
<div class="ui" style="left:835.5px;top:915px;font-size:8px;color:#fff;font-weight:bold;letter-spacing:-0.4px">PC</div>
<div class="a" style="left:834px;top:937.5px;width:15px;height:3px;background:#1a73d9;border-radius:1.5px"></div>
<svg style="left:870px;top:912px" width="24" height="24" viewBox="0 0 24 24" ><circle cx="12" cy="12" r="11.5" fill="#db4437"/><path d="M12 12L23.5 12A11.5 11.5 0 0 1 6.25 21.96Z" fill="#f4c20d"/><path d="M12 12L6.25 21.96A11.5 11.5 0 0 1 2.04 6.25Z" fill="#0f9d58"/><path d="M2.04 6.25A11.5 11.5 0 0 1 12 0.5" fill="#db4437"/><circle cx="12" cy="12" r="5.2" fill="#fff"/><circle cx="12" cy="12" r="4.1" fill="#1a73e8"/></svg>
<svg style="left:885px;top:906px" width="14" height="14" viewBox="0 0 14 14" ><circle cx="7" cy="7" r="6.5" fill="#5aa9e6" stroke="#dedad7" stroke-width="1"/><path d="M3.5 9.5L7 3.5L10.5 9.5Z" fill="#fff"/></svg>
<div class="a" style="left:878px;top:938.5px;width:6px;height:2px;background:#6f6f6f;border-radius:1px"></div>
<svg style="left:910px;top:912px" width="24" height="24" viewBox="0 0 24 24" ><circle cx="12" cy="12" r="11.5" fill="#db4437"/><path d="M12 12L23.5 12A11.5 11.5 0 0 1 6.25 21.96Z" fill="#f4c20d"/><path d="M12 12L6.25 21.96A11.5 11.5 0 0 1 2.04 6.25Z" fill="#0f9d58"/><path d="M2.04 6.25A11.5 11.5 0 0 1 12 0.5" fill="#db4437"/><circle cx="12" cy="12" r="5.2" fill="#fff"/><circle cx="12" cy="12" r="4.1" fill="#1a73e8"/></svg>
<svg style="left:922px;top:906px" width="14" height="14" viewBox="0 0 14 14" ><circle cx="7" cy="7" r="6.5" fill="#e8711c"/></svg>
<div class="ui" style="left:926px;top:908.5px;font-size:9px;color:#fff;font-weight:bold">k</div>
<div class="a" style="left:918px;top:938.5px;width:6px;height:2px;background:#6f6f6f;border-radius:1px"></div>
<svg style="left:1092px;top:921px" width="11" height="7" viewBox="0 0 11 7" ><path d="M0.8 6L5.5 1.2L10.2 6" fill="none" stroke="#333" stroke-width="1.3"/></svg>
<svg style="left:1117px;top:916px" width="16" height="17" viewBox="0 0 16 17" ><path d="M4 1L8 3.5L4 6L0.5 3.5ZM12 1L15.5 3.5L12 6L8 3.5ZM4 6.5L8 9L4 11.5L0.5 9ZM12 6.5L15.5 9L12 11.5L8 9Z" fill="#2a2a2a"/><rect x="1" y="8.5" width="7.5" height="8" rx="1" fill="#d8332c"/><text x="4.7" y="15.5" font-size="7" font-family="Liberation Sans" font-weight="bold" fill="#fff" text-anchor="middle">1</text></svg>
<svg style="left:1146px;top:917px" width="18" height="15" viewBox="0 0 18 15" ><path d="M4.5 12.5A3.5 3.5 0 0 1 4 5.5A5 5 0 0 1 13.5 5A3.8 3.8 0 0 1 13.5 12.5Z" fill="none" stroke="#262626" stroke-width="1.4"/><path d="M1.5 1.5L16 14" stroke="#262626" stroke-width="1.4"/></svg>
<svg style="left:1178px;top:915px" width="12" height="18" viewBox="0 0 12 18" ><rect x="3" y="1" width="6" height="10" rx="3" fill="none" stroke="#2878d8" stroke-width="1.5"/><path d="M1 8A5 5 0 0 0 11 8M6 13V16.5M3.5 16.5H8.5" fill="none" stroke="#2878d8" stroke-width="1.4"/></svg>
<div class="ui" style="left:1207px;top:918px;font-size:11px;color:#b8b8b8;">A</div>
<svg style="left:1237px;top:916px" width="17" height="17" viewBox="0 0 17 17" ><circle cx="8" cy="8" r="7.2" fill="#1b6ed6"/><circle cx="6" cy="5.5" r="3" fill="#3b8ff0" opacity="0.6"/><circle cx="13.3" cy="13" r="2.6" fill="#e0443a"/><circle cx="12" cy="14.3" r="1.5" fill="#f4c20d"/></svg>
<svg style="left:1271px;top:916px" width="17" height="14" viewBox="0 0 17 14" ><path d="M1 5A10.5 10.5 0 0 1 16 5M3.3 7.5A7.2 7.2 0 0 1 13.7 7.5M5.6 10A4 4 0 0 1 11.4 10" fill="none" stroke="#262626" stroke-width="1.4" stroke-linecap="round"/><circle cx="8.5" cy="12.3" r="1.3" fill="#262626"/></svg>
<svg style="left:1293px;top:917px" width="16" height="14" viewBox="0 0 16 14" ><path d="M1 5H4L8 1.5V12.5L4 9H1Z" fill="none" stroke="#262626" stroke-width="1.3" stroke-linejoin="round"/><path d="M10.5 4.5A3.5 3.5 0 0 1 10.5 9.5M12.5 2.5A6.5 6.5 0 0 1 12.5 11.5" fill="none" stroke="#262626" stroke-width="1.3" stroke-linecap="round"/></svg>
<svg style="left:1315px;top:916px" width="17" height="16" viewBox="0 0 17 16" ><rect x="1" y="3" width="12" height="9" rx="1" fill="none" stroke="#262626" stroke-width="1.3"/><path d="M1 3L13 12" stroke="#262626" stroke-width="1.3"/><path d="M10 9L15.5 14L16 11Z" fill="#262626"/><path d="M12 1H16V6" fill="none" stroke="#262626" stroke-width="1.2"/></svg>
<div class="ui" style="left:1375.5px;top:910.5px;font-size:10.7px;color:#1b1b1b;">11:58</div>
<div class="ui" style="left:1346px;top:925.5px;font-size:11.1px;color:#1b1b1b;">2024/11/09</div>
<svg style="left:1409px;top:916px" width="13" height="14" viewBox="0 0 13 14" ><path d="M2 10.5V6.5A4.5 4.5 0 0 1 11 6.5V10.5L12.3 11.5H0.7Z" fill="none" stroke="#262626" stroke-width="1.2" stroke-linejoin="round"/><path d="M5 12.8A1.6 1.6 0 0 0 8 12.8" fill="none" stroke="#262626" stroke-width="1.2"/></svg>
<svg style="left:1443px;top:406px" width="477" height="268" viewBox="0 0 477 268" >
<defs>
 <linearGradient id="wall" x1="0" y1="0" x2="1" y2="1"><stop offset="0" stop-color="#e4e6e2"/><stop offset="1" stop-color="#e6e6e0"/></linearGradient>
 <linearGradient id="door" x1="0" y1="0" x2="0" y2="1"><stop offset="0" stop-color="#ebe7de"/><stop offset="1" stop-color="#e6e0d5"/></linearGradient>
 <linearGradient id="ceil" x1="0" y1="0" x2="1" y2="0"><stop offset="0" stop-color="#d2d5d1"/><stop offset="1" stop-color="#d9dbd7"/></linearGradient>
 <radialGradient id="face" cx="0.5" cy="0.42" r="0.62"><stop offset="0" stop-color="#cfae9d"/><stop offset="0.75" stop-color="#b28c7c"/><stop offset="1" stop-color="#8f6e62"/></radialGradient>
 <linearGradient id="bot" x1="0" y1="0.7" x2="0" y2="1"><stop offset="0" stop-color="#000" stop-opacity="0"/><stop offset="1" stop-color="#000" stop-opacity="0.1"/></linearGradient>
 <filter id="soft" x="-5%" y="-5%" width="110%" height="110%"><feGaussianBlur stdDeviation="0.8"/></filter>
 <clipPath id="camclip"><rect x="0" y="0" width="477" height="268"/></clipPath>
</defs>
<g clip-path="url(#camclip)">
<g filter="url(#soft)">
<rect x="-5" y="-5" width="487" height="278" fill="url(#wall)"/>
<path d="M44 -5H482V19L69 35Z" fill="url(#ceil)"/>
<path d="M-5 -5H44L69 35L66 45H-5Z" fill="#cdd0cc"/>
<path d="M-5 45H66L20 273H-5Z" fill="#dcdeda"/>
<path d="M69 35L66 45L18 273" fill="none" stroke="#c9ccc8" stroke-width="1.5"/>
<path d="M132 46L420 36L458 273H106Z" fill="#ddd6c9"/>
<path d="M144 59L416 50L445 273H122Z" fill="url(#door)"/>
<path d="M144 59L416 50L417 56L144 65Z" fill="#c9c2b5"/>
<path d="M281 55V273" stroke="#cfc9bd" stroke-width="1.6"/>
<rect x="117" y="232" width="5" height="28" rx="2" fill="#8f9393"/>
<rect x="213" y="199" width="20" height="34" rx="4" fill="#26272a"/>
<path d="M148 273V252C150 238 165 230 190 229H205V273Z" fill="#a7352f"/>
<path d="M154 273C160 244 182 236 214 226L238 214L258 230L282 216L306 224C338 232 360 242 372 273Z" fill="#2e6493"/>
<path d="M176 250L198 273M322 258L358 252" stroke="#c9523e" stroke-width="2.5"/>
<path d="M221 226L252 222L283 220L288 273H221Z" fill="#6a2233"/>
<path d="M221 244H287M221 253H287M221 262H288" stroke="#d8d5d9" stroke-width="3"/>
<path d="M238 214L258 234L282 216" fill="none" stroke="#5a1d2b" stroke-width="3"/>
<path d="M238 192H279L282 220C270 232 250 232 236 218Z" fill="#a9887a"/>
<ellipse cx="254" cy="166" rx="33" ry="44" fill="url(#face)"/>
<path d="M218 160C212 128 224 108 252 106C280 104 294 124 290 160C286 140 282 132 270 128C254 124 238 126 228 140Z" fill="#2f3034"/>
<circle cx="236" cy="152" r="10" fill="none" stroke="#5a5452" stroke-width="1.6"/>
<circle cx="270" cy="152" r="10" fill="none" stroke="#5a5452" stroke-width="1.6"/>
<path d="M246 151H260" stroke="#5a5452" stroke-width="1.4"/>
<ellipse cx="236" cy="153" rx="4" ry="2" fill="#4a3d3a"/>
<ellipse cx="270" cy="153" rx="4" ry="2" fill="#4a3d3a"/>
<path d="M253 160L249 178L258 178" fill="none" stroke="#96746a" stroke-width="1.4"/>
<path d="M244 190C250 187 258 187 264 190" stroke="#8a5a55" stroke-width="2.5" fill="none"/>
<path d="M203 150C199 118 220 108 254 108C290 108 308 118 304 150" fill="none" stroke="#1d1e22" stroke-width="4.5"/>
<rect x="200" y="151" width="27" height="42" rx="10" fill="#1f2024"/>
<rect x="283" y="149" width="26" height="44" rx="10" fill="#1f2024"/>
<path d="M300 160V190" stroke="#3a4450" stroke-width="2"/>
<path d="M296 182L266 188" stroke="#45474c" stroke-width="2"/>
<ellipse cx="261" cy="189" rx="9" ry="5.5" fill="#161719"/>
<path d="M297 193C298 215 299 245 300 273" stroke="#1f2024" stroke-width="2.2" fill="none"/>
<rect x="-5" y="-5" width="487" height="278" fill="url(#bot)"/>
</g>
<text x="13" y="258" font-size="17.5" fill="#fff" font-family="Liberation Sans">小川慶一</text>
</g>
</svg>
<svg style="left:996.5px;top:239.5px" width="12" height="17" viewBox="0 0 12 17" ><path d="M0.6 0.6V14L3.9 10.9L6.2 15.6L8 14.8L5.8 10.2H10Z" fill="#fff" stroke="#000" stroke-width="1" stroke-linejoin="round"/></svg>
</body></html>
